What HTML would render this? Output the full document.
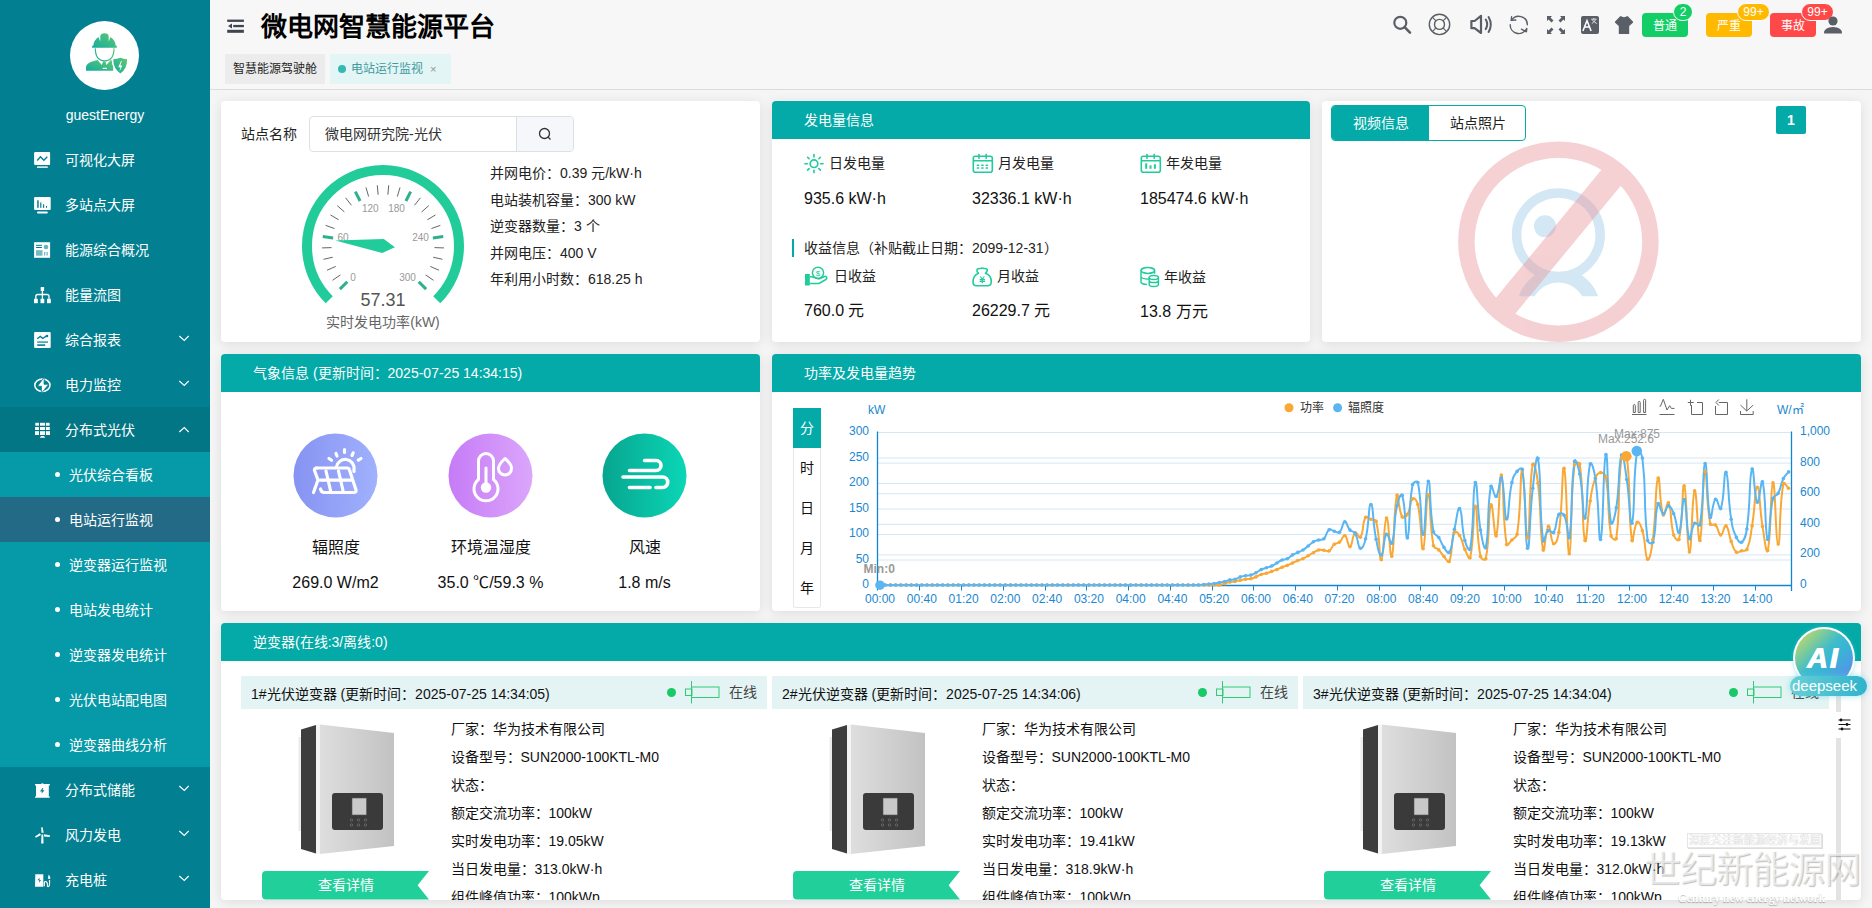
<!DOCTYPE html>
<html lang="zh-CN"><head><meta charset="utf-8">
<style>
*{box-sizing:border-box;margin:0;padding:0}
html,body{width:1872px;height:908px;overflow:hidden;background:#f5f5f5;font-family:"Liberation Sans",sans-serif;color:#000}
.abs{position:absolute}
#side{position:absolute;left:0;top:0;width:210px;height:908px;background:#028091;color:#fff;overflow:hidden}
.mi{position:absolute;left:0;width:210px;height:45px;font-size:14px;line-height:45px}
.mi .t{position:absolute;left:65px;top:1px}
.mi svg.ic{position:absolute;left:33px;top:14px;width:18px;height:18px}
.mi .ch{position:absolute;left:178px;top:19px;width:10px;height:6px}
.sub .t{left:69px}
.sub .b{position:absolute;left:55px;top:20px;width:5px;height:5px;border-radius:50%;background:#fff}
#hdr{position:absolute;left:210px;top:0;width:1662px;height:90px;background:#f7f7f7;border-bottom:1px solid #dcdcdc}
.panel{position:absolute;background:#fff;border-radius:4px;box-shadow:0 2px 12px 0 rgba(0,0,0,.1);overflow:hidden}
.ph{position:absolute;left:0;top:0;right:0;height:38px;background:#03aaa8;color:#fff;font-size:14px;line-height:38px;padding-left:32px}
</style></head><body>
<div id="side">
<div class="abs" style="left:70px;top:21px;width:69px;height:69px;border-radius:50%;background:#fff"></div>
<svg class="abs" style="left:80px;top:28px" width="50" height="50" viewBox="0 0 50 50">
<defs><linearGradient id="ga" x1="0" y1="1" x2="1" y2="0"><stop offset="0" stop-color="#13ad9e"/><stop offset="1" stop-color="#62c870"/></linearGradient></defs>
<g fill="url(#ga)">
<path d="M13.3 17.7 Q13.8 12 18.5 9 L20.3 13.6 L20.3 8.3 Q20.5 5.2 24.5 5.2 Q28.5 5.2 28.7 8.3 L28.7 13.6 L30.5 9 Q35.2 12 35.7 17.7 L36.8 17.7 L36.8 19.8 L12.1 19.8 L12.1 17.7 Z"/>
<path d="M6 42.7 L6 38.5 Q7 34.5 14 33 L17.5 32 L21.8 36.9 L23.1 33.6 L25.5 33.6 L26.4 36.9 L30.8 32 L33.2 32.6 L33.2 42.7 Z"/>
<path d="M33.3 31.3 Q37 31 40.3 29.7 Q43.6 31 47.1 31.3 Q47.2 41 40.3 45.4 Q33.4 41 33.3 31.3 Z"/>
</g>
<path d="M15.3 20.3 Q15.3 32.8 24.7 32.9 Q34 32.8 34 20.3" fill="none" stroke="url(#ga)" stroke-width="1.2"/>
<rect x="22.6" y="39.8" width="4.4" height="1.2" rx=".6" fill="#fff"/>
<path d="M32.2 31.5 Q32.2 41.5 40.3 46.5" fill="none" stroke="#fff" stroke-width="1.1"/>
<path d="M41 33 L38.3 39.2 L40.4 39.2 L39.5 43.5 L42.3 37.4 L40.3 37.4 L41.8 33 Z" fill="#fff"/>
</svg>
<div class="abs" style="left:0;top:105px;width:210px;text-align:center;font-size:14px;line-height:20px">guestEnergy</div>
<div class="mi" style="top:137px;"><svg class="abs" style="left:28px;top:8px" width="30" height="30" viewBox="0 0 30 30"><rect x="6.1" y="7.1" width="16" height="12.9" rx="1" fill="#fff"/><polyline points="9.2,15.5 12.5,11.8 15.8,15.2 19.3,11.8" fill="none" stroke="#028091" stroke-width="1.4"/><rect x="9" y="21.4" width="10.8" height="1.4" fill="#fff"/></svg><span class="t">可视化大屏</span></div>
<div class="mi" style="top:182px;"><svg class="abs" style="left:28px;top:8px" width="30" height="30" viewBox="0 0 30 30"><rect x="6.1" y="7.1" width="16.6" height="12.8" rx="1" fill="#fff"/><g fill="#028091"><rect x="9.2" y="10.3" width="1.5" height="7.5"/><rect x="12.2" y="12.5" width="1.2" height="5.3"/><rect x="15" y="14.4" width="1.2" height="3.4"/><rect x="18" y="16" width="1" height="1.8"/></g><rect x="9" y="21.5" width="10.8" height="2" rx="1" fill="#fff"/></svg><span class="t">多站点大屏</span></div>
<div class="mi" style="top:227px;"><svg class="abs" style="left:28px;top:8px" width="30" height="30" viewBox="0 0 30 30"><rect x="6.1" y="7.2" width="16" height="15.6" fill="#fff"/><g fill="#028091"><rect x="8" y="9.8" width="6" height="1"/><rect x="8" y="12" width="6" height="1"/><rect x="8" y="15.2" width="6.5" height="5.5" opacity=".55"/><circle cx="18" cy="12" r="2.3" opacity=".6"/><rect x="16" y="17" width="1.3" height="3.5" opacity=".55"/><rect x="18.5" y="17" width="1.3" height="3.5" opacity=".55"/></g></svg><span class="t">能源综合概况</span></div>
<div class="mi" style="top:272px;"><svg class="abs" style="left:28px;top:8px" width="30" height="30" viewBox="0 0 30 30"><rect x="12.7" y="7" width="3.4" height="4" fill="#fff"/><path d="M14.4 11 V19 M7.8 19 V16.5 Q7.8 14.5 9.8 14.5 H19 Q21 14.5 21 16.5 V19" fill="none" stroke="#fff" stroke-width="1.3"/><rect x="6" y="18.8" width="3.8" height="4.4" fill="#fff"/><rect x="12.5" y="18.8" width="3.8" height="4.4" fill="#fff"/><rect x="19" y="18.8" width="3.8" height="4.4" fill="#fff"/></svg><span class="t">能量流图</span></div>
<div class="mi" style="top:317px;"><svg class="abs" style="left:28px;top:8px" width="30" height="30" viewBox="0 0 30 30"><rect x="6.1" y="7.1" width="16.6" height="16" rx="1" fill="#fff"/><polyline points="9.2,13.8 12.3,11.5 14.8,13.5 19,10.7" fill="none" stroke="#028091" stroke-width="1.4"/><circle cx="19" cy="11" r="1.3" fill="#028091"/><rect x="9.2" y="16.3" width="10.8" height="1.6" fill="#028091" opacity=".75"/><rect x="9.2" y="19.3" width="8" height="1.6" fill="#028091"/></svg><span class="t">综合报表</span><svg class="abs" style="left:170px;top:16px" width="30" height="18" viewBox="0 0 30 18"><polyline points="9.3,3 14.3,7.4 18.7,3" fill="none" stroke="#fff" stroke-width="1.1"/></svg></div>
<div class="mi" style="top:362px;"><svg class="abs" style="left:28px;top:8px" width="30" height="30" viewBox="0 0 30 30"><ellipse cx="14.4" cy="15.3" rx="7.6" ry="6.2" fill="none" stroke="#fff" stroke-width="1.5"/><path d="M16.3 7 L9.5 16.3 L13.5 16.3 L13.3 23.3 L20.8 14.3 L16 14.3 Z" fill="#fff" stroke="#028091" stroke-width=".8"/></svg><span class="t">电力监控</span><svg class="abs" style="left:170px;top:16px" width="30" height="18" viewBox="0 0 30 18"><polyline points="9.3,3 14.3,7.4 18.7,3" fill="none" stroke="#fff" stroke-width="1.1"/></svg></div>
<div class="mi" style="top:407px;background:#037686;"><svg class="abs" style="left:28px;top:8px" width="30" height="30" viewBox="0 0 30 30"><g fill="#fff"><rect x="7.3" y="7.8" width="3.6" height="2.9"/><rect x="12" y="7.8" width="5.1" height="2.9"/><rect x="18" y="7.8" width="3.6" height="2.9"/><rect x="7.1" y="12" width="3.8" height="3"/><rect x="12" y="12" width="5.1" height="3"/><rect x="18" y="12" width="3.8" height="3"/><rect x="7" y="16.2" width="4" height="3.8"/><rect x="12" y="16.2" width="5.1" height="3.8"/><rect x="18" y="16.2" width="4" height="3.8"/><path d="M13 21 H16 L17.2 22.8 H11.8 Z"/></g></svg><span class="t">分布式光伏</span><svg class="abs" style="left:170px;top:16px" width="30" height="18" viewBox="0 0 30 18"><polyline points="9.3,9 14.3,4.6 18.7,9" fill="none" stroke="#fff" stroke-width="1.1"/></svg></div>
<div class="abs" style="left:0;top:452px;width:210px;height:315px;background:#0699a7"></div>
<div class="mi sub" style="top:452px;"><span class="b"></span><span class="t">光伏综合看板</span></div>
<div class="mi sub" style="top:497px;background:#236a86;"><span class="b"></span><span class="t">电站运行监视</span></div>
<div class="mi sub" style="top:542px;"><span class="b"></span><span class="t">逆变器运行监视</span></div>
<div class="mi sub" style="top:587px;"><span class="b"></span><span class="t">电站发电统计</span></div>
<div class="mi sub" style="top:632px;"><span class="b"></span><span class="t">逆变器发电统计</span></div>
<div class="mi sub" style="top:677px;"><span class="b"></span><span class="t">光伏电站配电图</span></div>
<div class="mi sub" style="top:722px;"><span class="b"></span><span class="t">逆变器曲线分析</span></div>
<div class="mi" style="top:767px"><svg class="abs" style="left:28px;top:8px" width="30" height="30" viewBox="0 0 30 30"><path d="M7 9 H13 Q14.4 7.6 15.8 9 H21.8 V10.5 H20.8 V21.5 H21.8 V22.8 H7 V21.5 H8 V10.5 H7 Z" fill="#fff"/><path d="M14.5 13 L12 16.5 L14 16.5 L13.5 18.8 L16.5 15.3 L14.5 15.3 L15.3 13 Z" fill="#028091"/></svg><span class="t">分布式储能</span><svg class="abs" style="left:170px;top:16px" width="30" height="18" viewBox="0 0 30 18"><polyline points="9.3,3 14.3,7.4 18.7,3" fill="none" stroke="#fff" stroke-width="1.1"/></svg></div>
<div class="mi" style="top:812px"><svg class="abs" style="left:28px;top:8px" width="30" height="30" viewBox="0 0 30 30"><g fill="#fff"><path d="M13.2 7.2 H14.6 L15.7 12.8 L13.5 12.8 Z"/><path d="M13.5 14.5 H15.2 L15.5 23.5 H13.2 Z"/><path d="M7 16.5 L11.8 13.3 L13 15 L7.8 17.8 Z"/><path d="M16 14.2 L21.8 15.3 L21.8 17 L16 16.5 Z"/></g></svg><span class="t">风力发电</span><svg class="abs" style="left:170px;top:16px" width="30" height="18" viewBox="0 0 30 18"><polyline points="9.3,3 14.3,7.4 18.7,3" fill="none" stroke="#fff" stroke-width="1.1"/></svg></div>
<div class="mi" style="top:857px"><svg class="abs" style="left:28px;top:8px" width="30" height="30" viewBox="0 0 30 30"><path d="M7.3 9.2 H15.3 V21.8 H7 Z" fill="#fff"/><path d="M11.5 12.8 L9.5 15.2 L11.3 15.2 L11 17.8 L13 15 L11.5 15 Z" fill="#028091"/><path d="M16.3 21.3 V18.5 Q16.3 16.3 17.6 16.5 Q19.3 16.8 19.5 19.5 V21.2 Q19.8 21.8 20.8 21.3 Q21.8 21 21.5 15" fill="none" stroke="#fff" stroke-width="1.2"/><path d="M20.8 9.5 Q22.5 11.5 22.2 14 H20.3 Q19.8 11.5 20.8 9.5 Z" fill="#fff"/></svg><span class="t">充电桩</span><svg class="abs" style="left:170px;top:16px" width="30" height="18" viewBox="0 0 30 18"><polyline points="9.3,3 14.3,7.4 18.7,3" fill="none" stroke="#fff" stroke-width="1.1"/></svg></div>
</div>
<div id="hdr">
<svg class="abs" style="left:17px;top:19px" width="18" height="15" viewBox="0 0 18 15"><g fill="#3f4450"><rect x="0.2" y="0.6" width="16.7" height="2.3"/><rect x="6.2" y="5.9" width="10.7" height="2.3"/><path d="M1 7 L5 4.5 L5 9.5 Z"/><rect x="0.2" y="10.8" width="16.7" height="3"/></g></svg>
<div class="abs" style="left:51px;top:9px;font-size:26px;line-height:36px;font-weight:bold;color:#000">微电网智慧能源平台</div>
<div class="abs" style="left:15px;top:54px;width:100px;height:30px;background:#ececec;font-size:12px;line-height:30px;text-align:center;color:#1f1f1f">智慧能源驾驶舱</div>
<div class="abs" style="left:120px;top:54px;width:121px;height:30px;background:#e3f5f5;font-size:12px;line-height:30px;color:#3e9aa0"><span class="abs" style="left:8px;top:11px;width:8px;height:8px;border-radius:50%;background:#33b9b3"></span><span class="abs" style="left:21px;top:0">电站运行监视</span><span class="abs" style="left:100px;top:0;font-size:11px;color:#8a9a9c">×</span></div>
<svg class="abs" style="left:1181px;top:14px" width="24" height="22" viewBox="0 0 24 22"><circle cx="9.3" cy="8.8" r="6" fill="none" stroke="#5a5e66" stroke-width="2.2"/><path d="M13.6 13.2 L19 18.6" stroke="#5a5e66" stroke-width="2.6" stroke-linecap="round"/></svg>
<svg class="abs" style="left:1217px;top:12px" width="26" height="26" viewBox="0 0 26 26"><circle cx="12.5" cy="12.4" r="10.2" fill="none" stroke="#5a5e66" stroke-width="1.4"/><circle cx="12.5" cy="12.4" r="5" fill="none" stroke="#5a5e66" stroke-width="1.4"/><path d="M5.3 5.2 L9 8.9 M19.7 5.2 L16 8.9 M5.3 19.6 L9 15.9 M19.7 19.6 L16 15.9" stroke="#5a5e66" stroke-width="1.2"/></svg>
<svg class="abs" style="left:1258px;top:13px" width="26" height="24" viewBox="0 0 26 24"><path d="M3.4 8 H6.6 L13 2.8 V20 L6.6 15.2 H3.4 Z" fill="none" stroke="#5a5e66" stroke-width="2.2" stroke-linejoin="round"/><path d="M17.8 6.5 Q20.6 11.3 17.8 16.1 M20.6 4 Q25 11.5 20.6 19" fill="none" stroke="#5a5e66" stroke-width="2" stroke-linecap="round"/></svg>
<svg class="abs" style="left:1297px;top:13px" width="24" height="24" viewBox="0 0 24 24"><g fill="none" stroke="#5a5e66" stroke-width="1.4" stroke-linecap="round" stroke-linejoin="round"><path d="M4.4 7.5 A8.6 8.6 0 0 1 20.4 11.8"/><path d="M4.6 3.8 L4.2 7.4 L8.8 7"/><path d="M3.2 11.8 A8.6 8.6 0 0 0 19.3 16.1"/><path d="M14.4 16.2 L19.4 18.8 L19.8 15.4"/></g></svg>
<svg class="abs" style="left:1335px;top:14px" width="22" height="22" viewBox="0 0 22 22"><g fill="#5a5e66"><path d="M2 2 H7 L5.5 3.5 L8.5 6.5 L6.5 8.5 L3.5 5.5 L2 7 Z"/><path d="M20 2 V7 L18.5 5.5 L15.5 8.5 L13.5 6.5 L16.5 3.5 L15 2 Z"/><path d="M2 20 V15 L3.5 16.5 L6.5 13.5 L8.5 15.5 L5.5 18.5 L7 20 Z"/><path d="M20 20 H15 L16.5 18.5 L13.5 15.5 L15.5 13.5 L18.5 16.5 L20 15 Z"/></g></svg>
<svg class="abs" style="left:1369px;top:14px" width="22" height="22" viewBox="0 0 22 22"><rect x="2" y="2" width="18" height="18" rx="2" fill="#5a5e66"/><path d="M3.9 17 L8 6.6 L12.1 17 M5.5 13 H10.5" fill="none" stroke="#fff" stroke-width="1.5"/><path d="M12.3 5.2 H17.5 M14.9 4 V5.2 M12.8 9.6 Q15 8 16.8 5.6 M13 5.6 Q15 8 17.8 9.6" fill="none" stroke="#fff" stroke-width=".8"/></svg>
<svg class="abs" style="left:1403px;top:14px" width="22" height="22" viewBox="0 0 22 22"><path d="M7.4 2 Q11 4.3 14.6 2 L19.9 7.6 Q20.3 8.2 19.9 8.8 L16.2 12 V19.9 H5.8 V12 L2.1 8.8 Q1.7 8.2 2.1 7.6 Z" fill="#5a5e66"/></svg>
<div class="abs" style="left:1432px;top:13px;width:46px;height:24px;padding-top:1px;border-radius:4px;background:#13ce66;color:#fff;font-size:12px;line-height:24px;text-align:center">普通</div>
<div class="abs" style="left:1463px;top:3px;width:20px;height:18px;border-radius:9px;background:#13ce66;border:1px solid #fff;color:#fff;font-size:12px;line-height:16px;text-align:center">2</div>
<div class="abs" style="left:1496px;top:13px;width:46px;height:24px;padding-top:1px;border-radius:4px;background:#ffba00;color:#fff;font-size:12px;line-height:24px;text-align:center">严重</div>
<div class="abs" style="left:1527px;top:3px;width:33px;height:18px;border-radius:9px;background:#ffba00;border:1px solid #fff;color:#fff;font-size:12px;line-height:16px;text-align:center">99+</div>
<div class="abs" style="left:1560px;top:13px;width:46px;height:24px;padding-top:1px;border-radius:4px;background:#ff4949;color:#fff;font-size:12px;line-height:24px;text-align:center">事故</div>
<div class="abs" style="left:1591px;top:3px;width:33px;height:18px;border-radius:9px;background:#ff4949;border:1px solid #fff;color:#fff;font-size:12px;line-height:16px;text-align:center">99+</div>
<svg class="abs" style="left:1612px;top:14px" width="22" height="22" viewBox="0 0 22 22"><circle cx="11" cy="7" r="4.6" fill="#5a5e66"/><path d="M2 19.5 Q2 13 11 13 Q20 13 20 19.5 Z" fill="#5a5e66"/></svg>
</div>
<div class="panel" style="left:221px;top:101px;width:539px;height:241px">
<div class="abs" style="left:20px;top:23px;font-size:14px;line-height:20px;color:#222">站点名称</div>
<div class="abs" style="left:88px;top:15px;width:265px;height:36px;border:1px solid #dcdfe6;border-radius:4px;background:#fff"></div>
<div class="abs" style="left:295px;top:16px;width:57px;height:34px;background:#f5f7fa;border-left:1px solid #dcdfe6;border-radius:0 4px 4px 0"></div>
<svg class="abs" style="left:316px;top:25px" width="16" height="16" viewBox="0 0 16 16"><circle cx="7.5" cy="7.5" r="5" fill="none" stroke="#333" stroke-width="1.3"/><path d="M11 11 L13.5 13.5" stroke="#333" stroke-width="1.3"/></svg>
<div class="abs" style="left:104px;top:23px;font-size:14px;line-height:20px;color:#333">微电网研究院-光伏</div>
<svg class="abs" style="left:0;top:0" width="539" height="241"><path d="M108.26 198.74 A76 76 0 1 1 215.74 198.74" fill="none" stroke="#22cc9a" stroke-width="10"/><line x1="126.29" y1="180.71" x2="118.87" y2="188.13" stroke="#2db18c" stroke-width="3"/><line x1="119.41" y1="173.95" x2="111.55" y2="179.29" stroke="#666" stroke-width="1"/><line x1="114.74" y1="165.45" x2="106.02" y2="169.23" stroke="#666" stroke-width="1"/><line x1="111.74" y1="156.23" x2="102.47" y2="158.31" stroke="#666" stroke-width="1"/><line x1="110.53" y1="146.62" x2="101.03" y2="146.92" stroke="#666" stroke-width="1"/><line x1="112.12" y1="137.10" x2="101.75" y2="135.46" stroke="#2db18c" stroke-width="3"/><line x1="113.54" y1="127.55" x2="104.61" y2="124.34" stroke="#666" stroke-width="1"/><line x1="117.67" y1="118.78" x2="109.49" y2="113.95" stroke="#666" stroke-width="1"/><line x1="123.37" y1="110.94" x2="116.24" y2="104.66" stroke="#666" stroke-width="1"/><line x1="130.44" y1="104.31" x2="124.61" y2="96.80" stroke="#666" stroke-width="1"/><line x1="139.07" y1="100.00" x2="134.31" y2="90.65" stroke="#2db18c" stroke-width="3"/><line x1="147.63" y1="95.54" x2="144.98" y2="86.42" stroke="#666" stroke-width="1"/><line x1="157.15" y1="93.73" x2="156.26" y2="84.27" stroke="#666" stroke-width="1"/><line x1="166.85" y1="93.73" x2="167.74" y2="84.27" stroke="#666" stroke-width="1"/><line x1="176.37" y1="95.54" x2="179.02" y2="86.42" stroke="#666" stroke-width="1"/><line x1="184.93" y1="100.00" x2="189.69" y2="90.65" stroke="#2db18c" stroke-width="3"/><line x1="193.56" y1="104.31" x2="199.39" y2="96.80" stroke="#666" stroke-width="1"/><line x1="200.63" y1="110.94" x2="207.76" y2="104.66" stroke="#666" stroke-width="1"/><line x1="206.33" y1="118.78" x2="214.51" y2="113.95" stroke="#666" stroke-width="1"/><line x1="210.46" y1="127.55" x2="219.39" y2="124.34" stroke="#666" stroke-width="1"/><line x1="211.88" y1="137.10" x2="222.25" y2="135.46" stroke="#2db18c" stroke-width="3"/><line x1="213.47" y1="146.62" x2="222.97" y2="146.92" stroke="#666" stroke-width="1"/><line x1="212.26" y1="156.23" x2="221.53" y2="158.31" stroke="#666" stroke-width="1"/><line x1="209.26" y1="165.45" x2="217.98" y2="169.23" stroke="#666" stroke-width="1"/><line x1="204.59" y1="173.95" x2="212.45" y2="179.29" stroke="#666" stroke-width="1"/><line x1="197.71" y1="180.71" x2="205.13" y2="188.13" stroke="#2db18c" stroke-width="3"/><text x="132.0" y="180.2" text-anchor="middle" font-size="10" fill="#999" font-family="Liberation Sans">0</text><text x="122.0" y="139.9" text-anchor="middle" font-size="10" fill="#999" font-family="Liberation Sans">60</text><text x="149.3" y="111.2" text-anchor="middle" font-size="10" fill="#999" font-family="Liberation Sans">120</text><text x="175.5" y="111.2" text-anchor="middle" font-size="10" fill="#999" font-family="Liberation Sans">180</text><text x="199.5" y="139.9" text-anchor="middle" font-size="10" fill="#999" font-family="Liberation Sans">240</text><text x="186.6" y="180.2" text-anchor="middle" font-size="10" fill="#999" font-family="Liberation Sans">300</text><path d="M114.32 139.50 L161.20 151.95 L173.92 146.37 L162.80 138.05 Z" fill="#22cc9a"/></svg>
<div class="abs" style="left:100px;top:187px;width:124px;text-align:center;font-size:18px;line-height:24px;color:#555">57.31</div>
<div class="abs" style="left:100px;top:211px;width:124px;text-align:center;font-size:14px;line-height:20px;color:#666">实时发电功率(kW)</div>
<div class="abs" style="left:269px;top:59px;font-size:14px;line-height:26.5px;color:#222">并网电价：0.39 元/kW·h<br>电站装机容量：300 kW<br>逆变器数量：3 个<br>并网电压：400 V<br>年利用小时数：618.25 h</div>
</div>
<div class="panel" style="left:772px;top:101px;width:538px;height:241px"><div class="ph">发电量信息</div>
<svg class="abs" style="left:28px;top:49px" width="30" height="30" viewBox="0 0 30 30"><circle cx="14" cy="13.7" r="3.8" fill="none" stroke="#22cc9a" stroke-width="1.7"/><g stroke="#22cc9a" stroke-width="1.6" stroke-linecap="round"><line x1="14" y1="4.6" x2="14" y2="7"/><line x1="14" y1="20.4" x2="14" y2="22.8"/><line x1="4.9" y1="13.7" x2="7.3" y2="13.7"/><line x1="20.7" y1="13.7" x2="23.1" y2="13.7"/><line x1="7.6" y1="7.3" x2="9.1" y2="8.8"/><line x1="18.9" y1="18.6" x2="20.4" y2="20.1"/><line x1="20.4" y1="7.3" x2="18.9" y2="8.8"/><line x1="9.1" y1="18.6" x2="7.6" y2="20.1"/></g></svg><div class="abs" style="left:57px;top:52px;font-size:14px;line-height:20px;color:#222">日发电量</div>
<svg class="abs" style="left:196px;top:49px" width="30" height="30" viewBox="0 0 30 30"><rect x="5.3" y="6.3" width="19" height="16" rx="2" fill="none" stroke="#22cc9a" stroke-width="1.6"/><line x1="5.3" y1="10.8" x2="24.3" y2="10.8" stroke="#22cc9a" stroke-width="1.6"/><line x1="11" y1="4.5" x2="11" y2="8.3" stroke="#22cc9a" stroke-width="1.6" stroke-linecap="round"/><line x1="18.2" y1="4.5" x2="18.2" y2="8.3" stroke="#22cc9a" stroke-width="1.6" stroke-linecap="round"/><rect x="8.7" y="14.600000000000001" width="2.6" height="1.4" rx=".5" fill="#22cc9a"/><rect x="8.7" y="17.3" width="2.6" height="1.4" rx=".5" fill="#22cc9a"/><rect x="13.1" y="14.600000000000001" width="2.6" height="1.4" rx=".5" fill="#22cc9a"/><rect x="13.1" y="17.3" width="2.6" height="1.4" rx=".5" fill="#22cc9a"/><rect x="17.5" y="14.600000000000001" width="2.6" height="1.4" rx=".5" fill="#22cc9a"/><rect x="17.5" y="17.3" width="2.6" height="1.4" rx=".5" fill="#22cc9a"/></svg><div class="abs" style="left:226px;top:52px;font-size:14px;line-height:20px;color:#222">月发电量</div>
<svg class="abs" style="left:364px;top:49px" width="30" height="30" viewBox="0 0 30 30"><rect x="5.3" y="6.3" width="19" height="16" rx="2" fill="none" stroke="#22cc9a" stroke-width="1.6"/><line x1="5.3" y1="10.8" x2="24.3" y2="10.8" stroke="#22cc9a" stroke-width="1.6"/><line x1="11" y1="4.5" x2="11" y2="8.3" stroke="#22cc9a" stroke-width="1.6" stroke-linecap="round"/><line x1="18.2" y1="4.5" x2="18.2" y2="8.3" stroke="#22cc9a" stroke-width="1.6" stroke-linecap="round"/><rect x="9.2" y="13.3" width="2" height="5.5" fill="#22cc9a"/><rect x="13.5" y="15.3" width="2" height="3.5" fill="#22cc9a"/><rect x="17.9" y="14.3" width="2" height="4.5" fill="#22cc9a"/></svg><div class="abs" style="left:394px;top:52px;font-size:14px;line-height:20px;color:#222">年发电量</div>
<div class="abs" style="left:32px;top:87px;font-size:16px;line-height:22px;color:#111">935.6 kW·h</div>
<div class="abs" style="left:200px;top:87px;font-size:16px;line-height:22px;color:#111">32336.1 kW·h</div>
<div class="abs" style="left:368px;top:87px;font-size:16px;line-height:22px;color:#111">185474.6 kW·h</div>
<div class="abs" style="left:20px;top:138px;width:2px;height:18px;background:#03aaa8"></div>
<div class="abs" style="left:32px;top:137px;font-size:14px;line-height:20px;color:#222">收益信息（补贴截止日期：2099-12-31）</div>
<svg class="abs" style="left:28px;top:161px" width="30" height="30" viewBox="0 0 30 30"><rect x="5" y="12" width="4.8" height="11.5" fill="#22cc9a"/><circle cx="18" cy="10.8" r="5.6" fill="none" stroke="#22cc9a" stroke-width="1.5"/><text x="18" y="14" text-anchor="middle" font-size="8" fill="#22cc9a" font-family="Liberation Sans">$</text><path d="M9.8 14.8 Q12 14.3 15 15.8 L18.3 16.7 Q19.5 16.7 20.5 16.2 L24.5 14.5 Q26.5 14 26.8 16 Q26.8 17 25.5 17.8 L19 21.5 H9.8" fill="none" stroke="#22cc9a" stroke-width="1.6"/></svg><div class="abs" style="left:62px;top:165px;font-size:14px;line-height:20px;color:#222">日收益</div>
<svg class="abs" style="left:196px;top:161px" width="30" height="30" viewBox="0 0 30 30"><path d="M10.5 11.3 Q8.5 9.5 9 7.5 Q10 6.3 12.5 6.5 Q14.2 5.6 15.8 6.5 Q18.3 6.3 19.3 7.5 Q19.5 9.5 17.5 11.3 Q23.5 13.5 23.3 20 Q23 23.8 19.5 23.8 H8.5 Q5 23.8 5 20 Q5 13.5 10.5 11.3 Z" fill="none" stroke="#22cc9a" stroke-width="1.6" stroke-linejoin="round"/><path d="M12.3 14.5 L14.3 17.3 L16.3 14.5 M14.3 17.3 V21.3 M11.6 17.6 H17 M11.6 19.4 H17" fill="none" stroke="#22cc9a" stroke-width="1.2"/></svg><div class="abs" style="left:225px;top:165px;font-size:14px;line-height:20px;color:#222">月收益</div>
<svg class="abs" style="left:364px;top:161px" width="30" height="30" viewBox="0 0 30 30"><g fill="none" stroke="#22cc9a" stroke-width="1.5"><ellipse cx="11.8" cy="8.5" rx="6.8" ry="2.9"/><path d="M5 8.5 V20 Q5 22 11 22.6 M18.6 8.5 V11.8 M5 15 Q6 16.8 12.8 17.3"/><ellipse cx="17.8" cy="15.5" rx="4.6" ry="2"/><path d="M13.2 15.5 V22.5 Q13.2 24.5 17.8 24.5 Q22.4 24.5 22.4 22.5 V15.5 M13.2 19 Q13.5 20.6 17.8 20.6 Q22 20.6 22.4 19"/></g></svg><div class="abs" style="left:392px;top:166px;font-size:14px;line-height:20px;color:#222">年收益</div>
<div class="abs" style="left:32px;top:199px;font-size:16px;line-height:22px;color:#111">760.0 元</div>
<div class="abs" style="left:200px;top:199px;font-size:16px;line-height:22px;color:#111">26229.7 元</div>
<div class="abs" style="left:368px;top:200px;font-size:16px;line-height:22px;color:#111">13.8 万元</div>
</div>
<div class="panel" style="left:1322px;top:101px;width:539px;height:241px">
<svg class="abs" style="left:0;top:0" width="539" height="241">
<clipPath id="cb"><rect x="0" y="0" width="539" height="195.3"/></clipPath>
<circle cx="236.4" cy="208.7" r="34.5" fill="none" stroke="#d3e7f4" stroke-width="14.5" clip-path="url(#cb)"/>
<circle cx="236.4" cy="133.8" r="41.8" fill="#fff" stroke="#d3e7f4" stroke-width="9.5"/>
<circle cx="223" cy="125.30000000000001" r="11" fill="#d3e7f4"/>
<g opacity="0.43">
<circle cx="236.4" cy="140.7" r="92" fill="none" stroke="#e89499" stroke-width="16.5"/>
<rect x="223.9" y="48.7" width="25" height="184" fill="#e89499" transform="rotate(39.5 236.4 140.7)"/>
</g>
</svg>
<div class="abs" style="left:9px;top:4px;width:195px;height:36px;border:1px solid #03aaa8;border-radius:4px;overflow:hidden;background:#fff">
<div class="abs" style="left:0;top:0;width:97px;height:34px;background:#03aaa8;color:#fff;font-size:14px;line-height:34px;text-align:center">视频信息</div>
<div class="abs" style="left:97px;top:0;width:97px;height:34px;color:#222;font-size:14px;line-height:34px;text-align:center">站点照片</div>
</div>
<div class="abs" style="left:454px;top:5px;width:30px;height:28px;background:#03aaa8;border-radius:2px;color:#fff;font-size:14px;font-weight:bold;line-height:28px;text-align:center">1</div>
</div>
<div class="panel" style="left:221px;top:354px;width:539px;height:257px"><div class="ph">气象信息 (更新时间：2025-07-25 14:34:15)</div>
<svg class="abs" style="left:72.0px;top:79.0px" width="85" height="85" viewBox="0 0 85 85"><defs><linearGradient id="g1" x1="0" y1="0" x2="1" y2="0"><stop offset="0" stop-color="#8793f2"/><stop offset="1" stop-color="#a0b1fd"/></linearGradient></defs><circle cx="42.5" cy="42.5" r="42" fill="url(#g1)"/><g fill="none" stroke="#fff" stroke-width="3.2" stroke-linecap="round" stroke-linejoin="round"><path d="M24 35 Q21 35 21.5 37.5 L25 47 L20.5 59.5"/><path d="M23 35 H54 Q56 35 56.5 37 L63 57 Q63.5 59.5 61 59.5 H31 Q28.5 59.5 27.5 56"/><path d="M27 47.2 H58.5"/><path d="M33 38 L37.5 57.5 M45.5 38 L50 57.5"/><path d="M43.5 34 A8.8 8.8 0 0 1 61 36.5 L61 38.5"/><path d="M43 20.5 L44 23 M51.5 16.5 L51.5 19.5 M60.2 19.8 L59 22.5 M36 25.5 L38.5 27.3 M68 25.5 L65.3 27.2"/></g></svg>
<svg class="abs" style="left:227.0px;top:79.0px" width="85" height="85" viewBox="0 0 85 85"><defs><linearGradient id="g2" x1="0" y1="0" x2="1" y2="0"><stop offset="0" stop-color="#c67bf6"/><stop offset="1" stop-color="#dba6fb"/></linearGradient></defs><circle cx="42.5" cy="42.5" r="42" fill="url(#g2)"/><g fill="none" stroke="#fff" stroke-width="3.2" stroke-linecap="round" stroke-linejoin="round"><path d="M30.5 46.5 V28 A7.5 7.5 0 0 1 45.5 28 V46.5 A12 12 0 1 1 30.5 46.5 Z" stroke-width="3"/><path d="M38 35 V50" stroke-width="3"/><circle cx="38" cy="54.5" r="5.2" fill="#fff" stroke="none"/><path d="M57 25.5 Q64 31.5 63.5 35.5 A6.5 6.5 0 0 1 50.5 35.5 Q50.5 31.5 57 25.5 Z" stroke-width="3"/></g></svg>
<svg class="abs" style="left:381.0px;top:79.0px" width="85" height="85" viewBox="0 0 85 85"><defs><linearGradient id="g3" x1="0" y1="0" x2="1" y2="0"><stop offset="0" stop-color="#07a58f"/><stop offset="1" stop-color="#0bd6b6"/></linearGradient></defs><circle cx="42.5" cy="42.5" r="42" fill="url(#g3)"/><g fill="none" stroke="#fff" stroke-width="3.2" stroke-linecap="round" stroke-linejoin="round"><path d="M27.5 37.5 H54 A5 5 0 0 0 54 27.5 H42.5" stroke-width="3.6"/><path d="M21 44 H60.5 A5.2 5.2 0 0 1 60.5 54.5 H54" stroke-width="3.6"/><path d="M27.5 54.5 H48" stroke-width="3.6"/></g></svg>
<div class="abs" style="left:54.5px;top:183px;width:120px;text-align:center;font-size:16px;line-height:22px;color:#111">辐照度</div>
<div class="abs" style="left:209.5px;top:183px;width:120px;text-align:center;font-size:16px;line-height:22px;color:#111">环境温湿度</div>
<div class="abs" style="left:363.5px;top:183px;width:120px;text-align:center;font-size:16px;line-height:22px;color:#111">风速</div>
<div class="abs" style="left:44.5px;top:218px;width:140px;text-align:center;font-size:16px;line-height:22px;color:#111">269.0 W/m2</div>
<div class="abs" style="left:199.5px;top:218px;width:140px;text-align:center;font-size:16px;line-height:22px;color:#111">35.0 ℃/59.3 %</div>
<div class="abs" style="left:353.5px;top:218px;width:140px;text-align:center;font-size:16px;line-height:22px;color:#111">1.8 m/s</div>
</div>
<div class="panel" style="left:772px;top:354px;width:1089px;height:257px"><div class="ph">功率及发电量趋势</div>
<div id="chartsvg"><svg class="abs" style="left:0;top:0" width="1089" height="257" viewBox="772 354 1089 257" font-family="Liberation Sans"><line x1="877.5" y1="585.5" x2="1791.5" y2="585.5" stroke="#d5e6f6" stroke-width="1"/><line x1="877.5" y1="560.0" x2="1791.5" y2="560.0" stroke="#d5e6f6" stroke-width="1"/><line x1="877.5" y1="534.5" x2="1791.5" y2="534.5" stroke="#d5e6f6" stroke-width="1"/><line x1="877.5" y1="509.0" x2="1791.5" y2="509.0" stroke="#d5e6f6" stroke-width="1"/><line x1="877.5" y1="483.5" x2="1791.5" y2="483.5" stroke="#d5e6f6" stroke-width="1"/><line x1="877.5" y1="458.0" x2="1791.5" y2="458.0" stroke="#d5e6f6" stroke-width="1"/><line x1="877.5" y1="432.5" x2="1791.5" y2="432.5" stroke="#d5e6f6" stroke-width="1"/><line x1="877.5" y1="554.9" x2="1791.5" y2="554.9" stroke="#d5e6f6" stroke-width="1"/><line x1="877.5" y1="524.3" x2="1791.5" y2="524.3" stroke="#d5e6f6" stroke-width="1"/><line x1="877.5" y1="493.7" x2="1791.5" y2="493.7" stroke="#d5e6f6" stroke-width="1"/><line x1="877.5" y1="463.1" x2="1791.5" y2="463.1" stroke="#d5e6f6" stroke-width="1"/><line x1="877.5" y1="431.5" x2="877.5" y2="586" stroke="#1186d1" stroke-width="1.3"/><line x1="1791.5" y1="431.5" x2="1791.5" y2="591" stroke="#1186d1" stroke-width="1.3"/><line x1="877" y1="585.5" x2="1792" y2="585.5" stroke="#1186d1" stroke-width="1.3"/><line x1="877.5" y1="585.5" x2="877.5" y2="590.5" stroke="#1186d1" stroke-width="1"/><line x1="919.5" y1="585.5" x2="919.5" y2="590.5" stroke="#1186d1" stroke-width="1"/><line x1="961.5" y1="585.5" x2="961.5" y2="590.5" stroke="#1186d1" stroke-width="1"/><line x1="1003.5" y1="585.5" x2="1003.5" y2="590.5" stroke="#1186d1" stroke-width="1"/><line x1="1045.5" y1="585.5" x2="1045.5" y2="590.5" stroke="#1186d1" stroke-width="1"/><line x1="1086.5" y1="585.5" x2="1086.5" y2="590.5" stroke="#1186d1" stroke-width="1"/><line x1="1128.5" y1="585.5" x2="1128.5" y2="590.5" stroke="#1186d1" stroke-width="1"/><line x1="1170.5" y1="585.5" x2="1170.5" y2="590.5" stroke="#1186d1" stroke-width="1"/><line x1="1212.5" y1="585.5" x2="1212.5" y2="590.5" stroke="#1186d1" stroke-width="1"/><line x1="1253.5" y1="585.5" x2="1253.5" y2="590.5" stroke="#1186d1" stroke-width="1"/><line x1="1295.5" y1="585.5" x2="1295.5" y2="590.5" stroke="#1186d1" stroke-width="1"/><line x1="1337.5" y1="585.5" x2="1337.5" y2="590.5" stroke="#1186d1" stroke-width="1"/><line x1="1379.5" y1="585.5" x2="1379.5" y2="590.5" stroke="#1186d1" stroke-width="1"/><line x1="1420.5" y1="585.5" x2="1420.5" y2="590.5" stroke="#1186d1" stroke-width="1"/><line x1="1462.5" y1="585.5" x2="1462.5" y2="590.5" stroke="#1186d1" stroke-width="1"/><line x1="1504.5" y1="585.5" x2="1504.5" y2="590.5" stroke="#1186d1" stroke-width="1"/><line x1="1546.5" y1="585.5" x2="1546.5" y2="590.5" stroke="#1186d1" stroke-width="1"/><line x1="1588.5" y1="585.5" x2="1588.5" y2="590.5" stroke="#1186d1" stroke-width="1"/><line x1="1629.5" y1="585.5" x2="1629.5" y2="590.5" stroke="#1186d1" stroke-width="1"/><line x1="1671.5" y1="585.5" x2="1671.5" y2="590.5" stroke="#1186d1" stroke-width="1"/><line x1="1713.5" y1="585.5" x2="1713.5" y2="590.5" stroke="#1186d1" stroke-width="1"/><line x1="1755.5" y1="585.5" x2="1755.5" y2="590.5" stroke="#1186d1" stroke-width="1"/><text x="869" y="588.0" text-anchor="end" font-size="12" fill="#1a87d0">0</text><text x="869" y="562.5" text-anchor="end" font-size="12" fill="#1a87d0">50</text><text x="869" y="537.0" text-anchor="end" font-size="12" fill="#1a87d0">100</text><text x="869" y="511.5" text-anchor="end" font-size="12" fill="#1a87d0">150</text><text x="869" y="486.0" text-anchor="end" font-size="12" fill="#1a87d0">200</text><text x="869" y="460.5" text-anchor="end" font-size="12" fill="#1a87d0">250</text><text x="869" y="435.0" text-anchor="end" font-size="12" fill="#1a87d0">300</text><text x="1800" y="588.0" font-size="12" fill="#1a87d0">0</text><text x="1800" y="557.4" font-size="12" fill="#1a87d0">200</text><text x="1800" y="526.8" font-size="12" fill="#1a87d0">400</text><text x="1800" y="496.2" font-size="12" fill="#1a87d0">600</text><text x="1800" y="465.6" font-size="12" fill="#1a87d0">800</text><text x="1800" y="435.0" font-size="12" fill="#1a87d0">1,000</text><text x="880.0" y="603" text-anchor="middle" font-size="12" fill="#1a87d0">00:00</text><text x="921.8" y="603" text-anchor="middle" font-size="12" fill="#1a87d0">00:40</text><text x="963.6" y="603" text-anchor="middle" font-size="12" fill="#1a87d0">01:20</text><text x="1005.3" y="603" text-anchor="middle" font-size="12" fill="#1a87d0">02:00</text><text x="1047.1" y="603" text-anchor="middle" font-size="12" fill="#1a87d0">02:40</text><text x="1088.9" y="603" text-anchor="middle" font-size="12" fill="#1a87d0">03:20</text><text x="1130.7" y="603" text-anchor="middle" font-size="12" fill="#1a87d0">04:00</text><text x="1172.4" y="603" text-anchor="middle" font-size="12" fill="#1a87d0">04:40</text><text x="1214.2" y="603" text-anchor="middle" font-size="12" fill="#1a87d0">05:20</text><text x="1256.0" y="603" text-anchor="middle" font-size="12" fill="#1a87d0">06:00</text><text x="1297.8" y="603" text-anchor="middle" font-size="12" fill="#1a87d0">06:40</text><text x="1339.5" y="603" text-anchor="middle" font-size="12" fill="#1a87d0">07:20</text><text x="1381.3" y="603" text-anchor="middle" font-size="12" fill="#1a87d0">08:00</text><text x="1423.1" y="603" text-anchor="middle" font-size="12" fill="#1a87d0">08:40</text><text x="1464.9" y="603" text-anchor="middle" font-size="12" fill="#1a87d0">09:20</text><text x="1506.6" y="603" text-anchor="middle" font-size="12" fill="#1a87d0">10:00</text><text x="1548.4" y="603" text-anchor="middle" font-size="12" fill="#1a87d0">10:40</text><text x="1590.2" y="603" text-anchor="middle" font-size="12" fill="#1a87d0">11:20</text><text x="1632.0" y="603" text-anchor="middle" font-size="12" fill="#1a87d0">12:00</text><text x="1673.7" y="603" text-anchor="middle" font-size="12" fill="#1a87d0">12:40</text><text x="1715.5" y="603" text-anchor="middle" font-size="12" fill="#1a87d0">13:20</text><text x="1757.3" y="603" text-anchor="middle" font-size="12" fill="#1a87d0">14:00</text><text x="868" y="413.5" font-size="12" fill="#1a87d0">kW</text><text x="1777" y="413.5" font-size="12" fill="#1a87d0">W/㎡</text><path d="M880.00 585.00 C882.61 585.00 882.61 585.00 885.22 585.00 C887.83 585.00 887.83 585.00 890.44 585.00 C893.06 585.00 893.06 585.00 895.67 585.00 C898.28 585.00 898.28 585.00 900.89 585.00 C903.50 585.00 903.50 585.00 906.11 585.00 C908.72 585.00 908.72 585.00 911.33 585.00 C913.94 585.00 913.94 585.00 916.55 585.00 C919.16 585.00 919.16 585.00 921.78 585.00 C924.39 585.00 924.39 585.00 927.00 585.00 C929.61 585.00 929.61 585.00 932.22 585.00 C934.83 585.00 934.83 585.00 937.44 585.00 C940.05 585.00 940.05 585.00 942.66 585.00 C945.27 585.00 945.27 585.00 947.89 585.00 C950.50 585.00 950.50 585.00 953.11 585.00 C955.72 585.00 955.72 585.00 958.33 585.00 C960.94 585.00 960.94 585.00 963.55 585.00 C966.16 585.00 966.16 585.00 968.77 585.00 C971.38 585.00 971.38 585.00 974.00 585.00 C976.61 585.00 976.61 585.00 979.22 585.00 C981.83 585.00 981.83 585.00 984.44 585.00 C987.05 585.00 987.05 585.00 989.66 585.00 C992.27 585.00 992.27 585.00 994.88 585.00 C997.50 585.00 997.50 585.00 1000.11 585.00 C1002.72 585.00 1002.72 585.00 1005.33 585.00 C1007.94 585.00 1007.94 585.00 1010.55 585.00 C1013.16 585.00 1013.16 585.00 1015.77 585.00 C1018.38 585.00 1018.38 585.00 1020.99 585.00 C1023.61 585.00 1023.61 585.00 1026.22 585.00 C1028.83 585.00 1028.83 585.00 1031.44 585.00 C1034.05 585.00 1034.05 585.00 1036.66 585.00 C1039.27 585.00 1039.27 585.00 1041.88 585.00 C1044.49 585.00 1044.49 585.00 1047.10 585.00 C1049.72 585.00 1049.72 585.00 1052.33 585.00 C1054.94 585.00 1054.94 585.00 1057.55 585.00 C1060.16 585.00 1060.16 585.00 1062.77 585.00 C1065.38 585.00 1065.38 585.00 1067.99 585.00 C1070.60 585.00 1070.60 585.00 1073.21 585.00 C1075.82 585.00 1075.82 585.00 1078.44 585.00 C1081.05 585.00 1081.05 585.00 1083.66 585.00 C1086.27 585.00 1086.27 585.00 1088.88 585.00 C1091.49 585.00 1091.49 585.00 1094.10 585.00 C1096.71 585.00 1096.71 585.00 1099.32 585.00 C1101.93 585.00 1101.93 585.00 1104.55 585.00 C1107.16 585.00 1107.16 585.00 1109.77 585.00 C1112.38 585.00 1112.38 585.00 1114.99 585.00 C1117.60 585.00 1117.60 585.00 1120.21 585.00 C1122.82 585.00 1122.82 585.00 1125.43 585.00 C1128.05 585.00 1128.05 585.00 1130.66 585.00 C1133.27 585.00 1133.27 585.00 1135.88 585.00 C1138.49 585.00 1138.49 585.00 1141.10 585.00 C1143.71 585.00 1143.71 585.00 1146.32 585.00 C1148.93 585.00 1148.93 585.00 1151.54 585.00 C1154.16 585.00 1154.16 585.00 1156.77 585.00 C1159.38 585.00 1159.38 585.00 1161.99 585.00 C1164.60 585.00 1164.60 585.00 1167.21 585.00 C1169.82 585.00 1169.82 585.00 1172.43 585.00 C1175.04 585.00 1175.04 585.00 1177.65 585.00 C1180.26 585.00 1180.26 585.00 1182.88 585.00 C1185.49 585.00 1185.49 585.00 1188.10 585.00 C1190.71 585.00 1190.71 585.00 1193.32 585.00 C1195.93 585.00 1195.93 585.00 1198.54 585.00 C1201.15 585.00 1201.15 585.00 1203.76 585.00 C1206.38 585.00 1206.38 585.00 1208.99 585.00 C1211.60 585.00 1211.60 585.00 1214.21 585.00 C1216.82 585.00 1216.86 585.34 1219.43 585.00 C1222.09 584.64 1222.05 584.32 1224.65 583.60 C1227.27 582.87 1227.22 582.63 1229.87 582.10 C1232.44 581.58 1232.51 581.95 1235.10 581.50 C1237.73 581.05 1237.70 580.85 1240.32 580.30 C1242.92 579.75 1242.91 579.70 1245.54 579.30 C1248.14 578.90 1248.22 579.29 1250.76 578.70 C1253.44 578.09 1253.42 577.93 1255.98 576.90 C1258.65 575.83 1258.50 575.43 1261.21 574.50 C1263.73 573.63 1263.86 574.06 1266.43 573.30 C1269.09 572.51 1269.03 572.33 1271.65 571.40 C1274.25 570.48 1274.31 570.63 1276.87 569.60 C1279.53 568.53 1279.43 568.27 1282.09 567.20 C1284.65 566.17 1284.76 566.43 1287.32 565.40 C1289.98 564.33 1289.94 564.22 1292.54 563.00 C1295.16 561.77 1295.09 561.60 1297.76 560.50 C1300.31 559.45 1300.48 559.85 1302.98 558.70 C1305.71 557.45 1305.59 557.20 1308.20 555.70 C1310.82 554.20 1310.78 554.14 1313.43 552.70 C1316.01 551.29 1315.88 550.64 1318.65 550.00 C1321.11 549.44 1321.27 550.08 1323.87 550.30 C1326.49 550.53 1327.10 552.07 1329.09 550.90 C1332.32 549.00 1331.16 546.81 1334.31 544.17 C1336.38 542.43 1337.45 543.87 1339.54 542.15 C1342.67 539.56 1342.63 534.63 1344.76 535.54 C1347.85 536.86 1347.61 547.21 1349.98 546.61 C1352.83 545.89 1351.63 536.12 1355.20 532.89 C1356.85 531.41 1359.13 539.12 1360.42 537.19 C1364.35 531.35 1361.54 524.37 1365.65 517.36 C1366.76 515.44 1368.26 518.35 1370.87 519.34 C1373.48 520.33 1375.43 518.78 1376.09 521.32 C1380.66 539.03 1378.81 560.63 1381.31 559.83 C1384.03 558.97 1383.81 518.97 1386.53 518.02 C1389.03 517.15 1389.74 560.58 1391.76 556.20 C1394.96 549.26 1393.14 509.81 1396.98 495.37 C1398.37 490.14 1398.06 509.33 1402.20 516.86 C1403.28 518.83 1406.07 516.73 1407.42 514.38 C1411.29 507.64 1409.09 502.05 1412.64 498.68 C1414.32 497.09 1417.09 500.74 1417.87 504.46 C1422.31 525.78 1420.73 550.93 1423.09 548.76 C1425.95 546.13 1425.63 495.64 1428.31 494.88 C1430.85 494.15 1428.91 521.43 1433.53 545.79 C1434.13 548.95 1436.45 547.55 1438.75 549.92 C1441.67 552.92 1441.16 553.41 1443.98 556.53 C1446.38 559.19 1448.18 563.86 1449.20 561.49 C1453.40 551.71 1450.10 542.97 1454.42 532.23 C1455.32 530.00 1458.11 533.01 1459.64 535.54 C1463.33 541.60 1461.72 542.75 1464.86 549.42 C1466.94 553.82 1469.25 561.11 1470.09 557.69 C1474.47 539.63 1472.67 506.74 1475.31 506.45 C1477.89 506.16 1475.83 533.05 1480.53 556.53 C1481.06 559.16 1485.26 561.12 1485.75 558.68 C1490.48 535.25 1487.67 512.00 1490.97 504.79 C1492.90 500.60 1494.42 540.93 1496.20 535.87 C1499.64 526.06 1498.98 473.03 1501.42 475.04 C1504.20 477.33 1501.89 514.90 1506.64 544.46 C1507.11 547.38 1509.42 542.40 1511.86 540.00 C1514.64 537.28 1516.51 537.99 1517.08 534.21 C1521.73 503.53 1519.77 470.19 1522.31 471.07 C1524.99 472.01 1525.04 539.43 1527.53 537.85 C1530.26 536.12 1528.62 486.01 1532.75 464.46 C1533.85 458.74 1536.79 473.63 1537.97 483.31 C1542.01 516.36 1539.36 534.14 1543.19 549.92 C1544.58 555.63 1545.44 528.02 1548.42 526.28 C1550.66 524.97 1550.56 542.05 1553.64 543.80 C1555.78 545.02 1558.00 538.47 1558.86 532.23 C1563.22 500.78 1561.85 463.83 1564.08 468.43 C1567.07 474.57 1566.75 554.66 1569.30 553.73 C1571.97 552.76 1569.59 506.96 1574.53 464.64 C1574.82 462.15 1579.41 461.66 1579.75 464.09 C1584.63 499.57 1581.53 528.31 1584.97 540.45 C1586.76 546.77 1586.93 520.61 1590.19 501.00 C1592.15 489.25 1591.41 488.59 1595.41 477.73 C1596.64 474.41 1597.96 472.78 1600.64 472.64 C1603.18 472.50 1605.31 473.86 1605.86 477.18 C1610.53 505.49 1606.33 507.97 1611.08 535.91 C1611.55 538.70 1615.95 541.28 1616.30 538.64 C1621.17 502.19 1616.63 496.33 1621.52 457.73 C1621.85 455.15 1626.43 453.77 1626.75 456.27 C1631.65 495.14 1627.70 513.50 1631.97 540.45 C1632.92 546.50 1633.78 525.42 1637.19 522.27 C1639.00 520.60 1641.07 526.06 1642.41 530.82 C1646.29 544.52 1644.57 556.62 1647.63 559.18 C1649.79 560.99 1651.56 549.59 1652.86 539.55 C1656.78 509.05 1654.82 485.74 1658.08 478.09 C1660.05 473.47 1659.45 505.88 1663.30 515.00 C1664.67 518.24 1667.01 499.93 1668.52 502.82 C1672.23 509.93 1669.44 519.85 1673.74 535.00 C1674.66 538.22 1678.37 542.34 1678.97 539.55 C1683.59 517.79 1681.84 483.14 1684.19 485.91 C1687.07 489.32 1686.70 550.63 1689.41 551.91 C1691.92 553.09 1691.75 493.98 1694.63 490.82 C1696.98 488.25 1697.67 544.53 1699.85 540.45 C1702.89 534.80 1702.12 476.00 1705.08 471.36 C1707.34 467.82 1705.55 499.71 1710.30 524.09 C1710.77 526.53 1713.85 523.26 1715.52 525.00 C1719.07 528.71 1718.04 534.76 1720.74 535.00 C1723.26 535.22 1723.92 524.66 1725.96 525.91 C1729.14 527.85 1728.19 533.79 1731.19 541.36 C1733.41 546.98 1732.80 549.01 1736.41 552.27 C1738.02 553.74 1739.01 551.50 1741.63 550.82 C1744.23 550.14 1745.90 551.81 1746.85 549.55 C1751.13 539.35 1750.08 537.84 1752.07 525.91 C1755.30 506.65 1754.70 487.05 1757.30 487.18 C1759.92 487.32 1759.29 506.93 1762.52 526.45 C1764.52 538.56 1766.35 556.25 1767.74 550.45 C1771.57 534.44 1770.22 484.49 1772.96 482.82 C1775.44 481.31 1775.56 543.91 1778.18 544.09 C1780.78 544.27 1778.73 508.56 1783.41 483.55 C1783.95 480.65 1786.02 485.91 1788.63 488.27" fill="none" stroke="#f9a835" stroke-width="2"/><path d="M880.00 585.00 C882.61 585.00 882.61 585.00 885.22 585.00 C887.83 585.00 887.83 585.00 890.44 585.00 C893.06 585.00 893.06 585.00 895.67 585.00 C898.28 585.00 898.28 585.00 900.89 585.00 C903.50 585.00 903.50 585.00 906.11 585.00 C908.72 585.00 908.72 585.00 911.33 585.00 C913.94 585.00 913.94 585.00 916.55 585.00 C919.16 585.00 919.16 585.00 921.78 585.00 C924.39 585.00 924.39 585.00 927.00 585.00 C929.61 585.00 929.61 585.00 932.22 585.00 C934.83 585.00 934.83 585.00 937.44 585.00 C940.05 585.00 940.05 585.00 942.66 585.00 C945.27 585.00 945.27 585.00 947.89 585.00 C950.50 585.00 950.50 585.00 953.11 585.00 C955.72 585.00 955.72 585.00 958.33 585.00 C960.94 585.00 960.94 585.00 963.55 585.00 C966.16 585.00 966.16 585.00 968.77 585.00 C971.38 585.00 971.38 585.00 974.00 585.00 C976.61 585.00 976.61 585.00 979.22 585.00 C981.83 585.00 981.83 585.00 984.44 585.00 C987.05 585.00 987.05 585.00 989.66 585.00 C992.27 585.00 992.27 585.00 994.88 585.00 C997.50 585.00 997.50 585.00 1000.11 585.00 C1002.72 585.00 1002.72 585.00 1005.33 585.00 C1007.94 585.00 1007.94 585.00 1010.55 585.00 C1013.16 585.00 1013.16 585.00 1015.77 585.00 C1018.38 585.00 1018.38 585.00 1020.99 585.00 C1023.61 585.00 1023.61 585.00 1026.22 585.00 C1028.83 585.00 1028.83 585.00 1031.44 585.00 C1034.05 585.00 1034.05 585.00 1036.66 585.00 C1039.27 585.00 1039.27 585.00 1041.88 585.00 C1044.49 585.00 1044.49 585.00 1047.10 585.00 C1049.72 585.00 1049.72 585.00 1052.33 585.00 C1054.94 585.00 1054.94 585.00 1057.55 585.00 C1060.16 585.00 1060.16 585.00 1062.77 585.00 C1065.38 585.00 1065.38 585.00 1067.99 585.00 C1070.60 585.00 1070.60 585.00 1073.21 585.00 C1075.82 585.00 1075.82 585.00 1078.44 585.00 C1081.05 585.00 1081.05 585.00 1083.66 585.00 C1086.27 585.00 1086.27 585.00 1088.88 585.00 C1091.49 585.00 1091.49 585.00 1094.10 585.00 C1096.71 585.00 1096.71 585.00 1099.32 585.00 C1101.93 585.00 1101.93 585.00 1104.55 585.00 C1107.16 585.00 1107.16 585.00 1109.77 585.00 C1112.38 585.00 1112.38 585.00 1114.99 585.00 C1117.60 585.00 1117.60 585.00 1120.21 585.00 C1122.82 585.00 1122.82 585.00 1125.43 585.00 C1128.05 585.00 1128.05 585.00 1130.66 585.00 C1133.27 585.00 1133.27 585.00 1135.88 585.00 C1138.49 585.00 1138.49 585.00 1141.10 585.00 C1143.71 585.00 1143.71 585.00 1146.32 585.00 C1148.93 585.00 1148.93 585.00 1151.54 585.00 C1154.16 585.00 1154.16 585.00 1156.77 585.00 C1159.38 585.00 1159.38 585.00 1161.99 585.00 C1164.60 585.00 1164.60 585.00 1167.21 585.00 C1169.82 585.00 1169.82 585.00 1172.43 585.00 C1175.04 585.00 1175.04 585.00 1177.65 585.00 C1180.26 585.00 1180.26 585.00 1182.88 585.00 C1185.49 585.00 1185.49 585.00 1188.10 585.00 C1190.71 585.00 1190.71 585.00 1193.32 585.00 C1195.93 585.00 1195.94 585.12 1198.54 585.00 C1201.16 584.88 1201.15 584.77 1203.76 584.53 C1206.38 584.30 1206.38 584.30 1208.99 584.07 C1211.60 583.83 1211.62 583.98 1214.21 583.60 C1216.84 583.22 1216.82 583.07 1219.43 582.55 C1222.04 582.02 1222.07 582.15 1224.65 581.50 C1227.30 580.83 1227.21 580.46 1229.87 579.90 C1232.43 579.36 1232.60 580.02 1235.10 579.30 C1237.82 578.52 1237.62 577.83 1240.32 576.90 C1242.84 576.03 1242.90 576.15 1245.54 575.70 C1248.13 575.25 1248.27 575.82 1250.76 575.10 C1253.49 574.32 1253.44 574.04 1255.98 572.70 C1258.67 571.29 1258.47 570.88 1261.21 569.60 C1263.69 568.43 1263.82 568.70 1266.43 567.80 C1269.04 566.90 1269.15 567.15 1271.65 566.00 C1274.37 564.75 1274.26 564.50 1276.87 563.00 C1279.48 561.50 1279.34 561.14 1282.09 560.00 C1284.56 558.99 1284.94 559.86 1287.32 558.70 C1290.16 557.31 1289.78 556.56 1292.54 554.90 C1295.01 553.41 1295.14 553.63 1297.76 552.40 C1300.36 551.18 1300.55 551.49 1302.98 550.00 C1305.77 548.29 1305.62 548.03 1308.20 546.00 C1310.84 543.93 1310.56 543.44 1313.43 541.80 C1315.79 540.44 1316.00 540.79 1318.65 540.00 C1321.22 539.24 1322.09 540.46 1323.87 538.70 C1327.31 535.31 1325.66 532.16 1329.09 529.70 C1330.88 528.41 1331.68 530.57 1334.31 531.20 C1336.90 531.83 1337.90 533.70 1339.54 532.23 C1343.12 529.01 1341.92 522.40 1344.76 521.82 C1347.14 521.33 1346.78 526.54 1349.98 530.08 C1352.00 532.32 1353.73 530.83 1355.20 533.39 C1358.95 539.92 1357.34 546.70 1360.42 548.26 C1362.56 549.35 1364.39 543.93 1365.65 538.68 C1369.62 522.03 1368.28 504.34 1370.87 504.46 C1373.50 504.59 1372.54 522.04 1376.09 539.17 C1377.76 547.25 1379.03 555.96 1381.31 554.88 C1384.25 553.48 1383.03 538.09 1386.53 534.21 C1388.26 532.31 1390.62 546.39 1391.76 543.31 C1395.85 532.17 1392.98 524.12 1396.98 505.79 C1398.21 500.15 1401.08 491.94 1402.20 495.37 C1406.30 507.97 1405.10 540.24 1407.42 537.85 C1410.32 534.87 1407.92 509.62 1412.64 484.63 C1413.14 482.02 1417.36 480.23 1417.87 482.64 C1422.58 505.03 1420.51 534.54 1423.09 534.21 C1425.73 533.88 1425.64 481.96 1428.31 481.32 C1430.86 480.72 1429.01 507.38 1433.53 531.74 C1434.23 535.48 1436.61 534.30 1438.75 537.52 C1441.83 542.15 1440.80 542.91 1443.98 547.44 C1446.02 550.35 1447.98 554.51 1449.20 552.40 C1453.20 545.42 1451.67 540.79 1454.42 529.26 C1456.89 518.89 1457.57 506.36 1459.64 508.60 C1462.79 511.98 1460.88 525.05 1464.86 540.50 C1466.10 545.30 1469.40 552.88 1470.09 549.09 C1474.62 523.96 1472.26 488.18 1475.31 482.64 C1477.49 478.68 1476.75 506.60 1480.53 530.08 C1481.97 539.00 1484.56 552.43 1485.75 547.44 C1489.78 530.53 1486.58 507.72 1490.97 486.28 C1491.80 482.26 1494.26 498.12 1496.20 496.53 C1499.48 493.82 1499.75 474.10 1501.42 477.69 C1504.97 485.33 1503.87 517.69 1506.64 519.01 C1509.09 520.17 1507.96 500.44 1511.86 482.64 C1513.18 476.64 1513.48 475.96 1517.08 471.40 C1518.71 469.35 1521.96 466.88 1522.31 469.42 C1527.18 505.31 1524.56 542.92 1527.53 548.26 C1529.79 552.34 1529.27 518.15 1532.75 488.26 C1534.49 473.27 1536.57 451.47 1537.97 458.51 C1541.79 477.75 1538.61 509.20 1543.19 540.83 C1543.83 545.24 1544.90 533.36 1548.42 530.58 C1550.12 529.23 1552.45 534.41 1553.64 532.56 C1557.67 526.31 1554.78 521.16 1558.86 514.38 C1560.00 512.48 1563.10 513.04 1564.08 515.21 C1568.32 524.53 1568.10 543.56 1569.30 537.36 C1573.32 516.64 1570.10 488.16 1574.53 461.36 C1575.32 456.52 1578.51 467.37 1579.75 474.09 C1583.73 495.73 1582.62 520.34 1584.97 518.09 C1587.84 515.34 1586.13 479.44 1590.19 464.09 C1591.35 459.72 1594.36 471.02 1595.41 478.64 C1599.58 508.75 1598.46 544.59 1600.64 539.55 C1603.68 532.50 1602.96 459.09 1605.86 454.45 C1608.19 450.73 1606.84 501.21 1611.08 522.82 C1612.07 527.85 1615.09 515.58 1616.30 507.73 C1620.31 481.67 1617.98 464.56 1621.52 455.00 C1623.20 450.47 1624.85 467.15 1626.75 479.55 C1630.07 501.25 1630.00 528.57 1631.97 523.18 C1635.22 514.30 1632.53 480.01 1637.19 451.00 C1637.76 447.47 1641.91 453.78 1642.41 458.09 C1647.13 498.51 1642.74 501.01 1647.63 540.45 C1647.96 543.10 1652.21 544.56 1652.86 542.27 C1657.43 526.11 1654.04 514.59 1658.08 503.55 C1659.26 500.31 1660.43 513.08 1663.30 513.73 C1665.66 514.26 1665.91 505.91 1668.52 505.91 C1671.13 505.91 1672.03 509.40 1673.74 513.73 C1677.25 522.59 1677.05 534.88 1678.97 532.27 C1682.27 527.79 1681.80 498.09 1684.19 499.55 C1687.03 501.27 1685.72 530.28 1689.41 538.64 C1690.94 542.09 1690.73 528.27 1694.63 523.18 C1695.95 521.46 1699.42 527.45 1699.85 525.00 C1704.65 497.64 1702.29 465.58 1705.08 463.55 C1707.52 461.76 1706.43 504.16 1710.30 517.36 C1711.65 521.98 1712.20 501.96 1715.52 499.18 C1717.42 497.60 1719.56 511.69 1720.74 508.64 C1724.78 498.24 1723.68 469.96 1725.96 472.27 C1728.90 475.24 1727.46 495.95 1731.19 519.18 C1732.68 528.49 1732.62 528.99 1736.41 537.36 C1737.84 540.54 1739.88 543.67 1741.63 542.27 C1745.11 539.49 1745.85 536.01 1746.85 529.00 C1751.07 499.38 1748.72 477.57 1752.07 469.00 C1753.95 464.21 1754.09 498.37 1757.30 502.27 C1759.31 504.73 1761.12 476.74 1762.52 481.73 C1766.34 495.38 1764.69 534.60 1767.74 539.55 C1769.91 543.06 1768.55 518.23 1772.96 498.64 C1773.77 495.05 1776.47 496.46 1778.18 493.18 C1781.69 486.46 1780.04 485.49 1783.41 478.64 C1785.26 474.86 1786.02 475.27 1788.63 471.91" fill="none" stroke="#5ab6f2" stroke-width="2"/><g fill="#f9a835"><circle cx="880.0" cy="585.0" r="1.8"/><circle cx="885.2" cy="585.0" r="1.8"/><circle cx="890.4" cy="585.0" r="1.8"/><circle cx="895.7" cy="585.0" r="1.8"/><circle cx="900.9" cy="585.0" r="1.8"/><circle cx="906.1" cy="585.0" r="1.8"/><circle cx="911.3" cy="585.0" r="1.8"/><circle cx="916.6" cy="585.0" r="1.8"/><circle cx="921.8" cy="585.0" r="1.8"/><circle cx="927.0" cy="585.0" r="1.8"/><circle cx="932.2" cy="585.0" r="1.8"/><circle cx="937.4" cy="585.0" r="1.8"/><circle cx="942.7" cy="585.0" r="1.8"/><circle cx="947.9" cy="585.0" r="1.8"/><circle cx="953.1" cy="585.0" r="1.8"/><circle cx="958.3" cy="585.0" r="1.8"/><circle cx="963.6" cy="585.0" r="1.8"/><circle cx="968.8" cy="585.0" r="1.8"/><circle cx="974.0" cy="585.0" r="1.8"/><circle cx="979.2" cy="585.0" r="1.8"/><circle cx="984.4" cy="585.0" r="1.8"/><circle cx="989.7" cy="585.0" r="1.8"/><circle cx="994.9" cy="585.0" r="1.8"/><circle cx="1000.1" cy="585.0" r="1.8"/><circle cx="1005.3" cy="585.0" r="1.8"/><circle cx="1010.5" cy="585.0" r="1.8"/><circle cx="1015.8" cy="585.0" r="1.8"/><circle cx="1021.0" cy="585.0" r="1.8"/><circle cx="1026.2" cy="585.0" r="1.8"/><circle cx="1031.4" cy="585.0" r="1.8"/><circle cx="1036.7" cy="585.0" r="1.8"/><circle cx="1041.9" cy="585.0" r="1.8"/><circle cx="1047.1" cy="585.0" r="1.8"/><circle cx="1052.3" cy="585.0" r="1.8"/><circle cx="1057.5" cy="585.0" r="1.8"/><circle cx="1062.8" cy="585.0" r="1.8"/><circle cx="1068.0" cy="585.0" r="1.8"/><circle cx="1073.2" cy="585.0" r="1.8"/><circle cx="1078.4" cy="585.0" r="1.8"/><circle cx="1083.7" cy="585.0" r="1.8"/><circle cx="1088.9" cy="585.0" r="1.8"/><circle cx="1094.1" cy="585.0" r="1.8"/><circle cx="1099.3" cy="585.0" r="1.8"/><circle cx="1104.5" cy="585.0" r="1.8"/><circle cx="1109.8" cy="585.0" r="1.8"/><circle cx="1115.0" cy="585.0" r="1.8"/><circle cx="1120.2" cy="585.0" r="1.8"/><circle cx="1125.4" cy="585.0" r="1.8"/><circle cx="1130.7" cy="585.0" r="1.8"/><circle cx="1135.9" cy="585.0" r="1.8"/><circle cx="1141.1" cy="585.0" r="1.8"/><circle cx="1146.3" cy="585.0" r="1.8"/><circle cx="1151.5" cy="585.0" r="1.8"/><circle cx="1156.8" cy="585.0" r="1.8"/><circle cx="1162.0" cy="585.0" r="1.8"/><circle cx="1167.2" cy="585.0" r="1.8"/><circle cx="1172.4" cy="585.0" r="1.8"/><circle cx="1177.7" cy="585.0" r="1.8"/><circle cx="1182.9" cy="585.0" r="1.8"/><circle cx="1188.1" cy="585.0" r="1.8"/><circle cx="1193.3" cy="585.0" r="1.8"/><circle cx="1198.5" cy="585.0" r="1.8"/><circle cx="1203.8" cy="585.0" r="1.8"/><circle cx="1209.0" cy="585.0" r="1.8"/><circle cx="1214.2" cy="585.0" r="1.8"/><circle cx="1219.4" cy="585.0" r="1.8"/><circle cx="1224.7" cy="583.6" r="1.8"/><circle cx="1229.9" cy="582.1" r="1.8"/><circle cx="1235.1" cy="581.5" r="1.8"/><circle cx="1240.3" cy="580.3" r="1.8"/><circle cx="1245.5" cy="579.3" r="1.8"/><circle cx="1250.8" cy="578.7" r="1.8"/><circle cx="1256.0" cy="576.9" r="1.8"/><circle cx="1261.2" cy="574.5" r="1.8"/><circle cx="1266.4" cy="573.3" r="1.8"/><circle cx="1271.7" cy="571.4" r="1.8"/><circle cx="1276.9" cy="569.6" r="1.8"/><circle cx="1282.1" cy="567.2" r="1.8"/><circle cx="1287.3" cy="565.4" r="1.8"/><circle cx="1292.5" cy="563.0" r="1.8"/><circle cx="1297.8" cy="560.5" r="1.8"/><circle cx="1303.0" cy="558.7" r="1.8"/><circle cx="1308.2" cy="555.7" r="1.8"/><circle cx="1313.4" cy="552.7" r="1.8"/><circle cx="1318.6" cy="550.0" r="1.8"/><circle cx="1323.9" cy="550.3" r="1.8"/><circle cx="1329.1" cy="550.9" r="1.8"/><circle cx="1334.3" cy="544.2" r="1.8"/><circle cx="1339.5" cy="542.1" r="1.8"/><circle cx="1344.8" cy="535.5" r="1.8"/><circle cx="1350.0" cy="546.6" r="1.8"/><circle cx="1355.2" cy="532.9" r="1.8"/><circle cx="1360.4" cy="537.2" r="1.8"/><circle cx="1365.6" cy="517.4" r="1.8"/><circle cx="1370.9" cy="519.3" r="1.8"/><circle cx="1376.1" cy="521.3" r="1.8"/><circle cx="1381.3" cy="559.8" r="1.8"/><circle cx="1386.5" cy="518.0" r="1.8"/><circle cx="1391.8" cy="556.2" r="1.8"/><circle cx="1397.0" cy="495.4" r="1.8"/><circle cx="1402.2" cy="516.9" r="1.8"/><circle cx="1407.4" cy="514.4" r="1.8"/><circle cx="1412.6" cy="498.7" r="1.8"/><circle cx="1417.9" cy="504.5" r="1.8"/><circle cx="1423.1" cy="548.8" r="1.8"/><circle cx="1428.3" cy="494.9" r="1.8"/><circle cx="1433.5" cy="545.8" r="1.8"/><circle cx="1438.8" cy="549.9" r="1.8"/><circle cx="1444.0" cy="556.5" r="1.8"/><circle cx="1449.2" cy="561.5" r="1.8"/><circle cx="1454.4" cy="532.2" r="1.8"/><circle cx="1459.6" cy="535.5" r="1.8"/><circle cx="1464.9" cy="549.4" r="1.8"/><circle cx="1470.1" cy="557.7" r="1.8"/><circle cx="1475.3" cy="506.4" r="1.8"/><circle cx="1480.5" cy="556.5" r="1.8"/><circle cx="1485.8" cy="558.7" r="1.8"/><circle cx="1491.0" cy="504.8" r="1.8"/><circle cx="1496.2" cy="535.9" r="1.8"/><circle cx="1501.4" cy="475.0" r="1.8"/><circle cx="1506.6" cy="544.5" r="1.8"/><circle cx="1511.9" cy="540.0" r="1.8"/><circle cx="1517.1" cy="534.2" r="1.8"/><circle cx="1522.3" cy="471.1" r="1.8"/><circle cx="1527.5" cy="537.9" r="1.8"/><circle cx="1532.8" cy="464.5" r="1.8"/><circle cx="1538.0" cy="483.3" r="1.8"/><circle cx="1543.2" cy="549.9" r="1.8"/><circle cx="1548.4" cy="526.3" r="1.8"/><circle cx="1553.6" cy="543.8" r="1.8"/><circle cx="1558.9" cy="532.2" r="1.8"/><circle cx="1564.1" cy="468.4" r="1.8"/><circle cx="1569.3" cy="553.7" r="1.8"/><circle cx="1574.5" cy="464.6" r="1.8"/><circle cx="1579.7" cy="464.1" r="1.8"/><circle cx="1585.0" cy="540.5" r="1.8"/><circle cx="1590.2" cy="501.0" r="1.8"/><circle cx="1595.4" cy="477.7" r="1.8"/><circle cx="1600.6" cy="472.6" r="1.8"/><circle cx="1605.9" cy="477.2" r="1.8"/><circle cx="1611.1" cy="535.9" r="1.8"/><circle cx="1616.3" cy="538.6" r="1.8"/><circle cx="1621.5" cy="457.7" r="1.8"/><circle cx="1626.7" cy="456.3" r="1.8"/><circle cx="1632.0" cy="540.5" r="1.8"/><circle cx="1637.2" cy="522.3" r="1.8"/><circle cx="1642.4" cy="530.8" r="1.8"/><circle cx="1647.6" cy="559.2" r="1.8"/><circle cx="1652.9" cy="539.5" r="1.8"/><circle cx="1658.1" cy="478.1" r="1.8"/><circle cx="1663.3" cy="515.0" r="1.8"/><circle cx="1668.5" cy="502.8" r="1.8"/><circle cx="1673.7" cy="535.0" r="1.8"/><circle cx="1679.0" cy="539.5" r="1.8"/><circle cx="1684.2" cy="485.9" r="1.8"/><circle cx="1689.4" cy="551.9" r="1.8"/><circle cx="1694.6" cy="490.8" r="1.8"/><circle cx="1699.9" cy="540.5" r="1.8"/><circle cx="1705.1" cy="471.4" r="1.8"/><circle cx="1710.3" cy="524.1" r="1.8"/><circle cx="1715.5" cy="525.0" r="1.8"/><circle cx="1720.7" cy="535.0" r="1.8"/><circle cx="1726.0" cy="525.9" r="1.8"/><circle cx="1731.2" cy="541.4" r="1.8"/><circle cx="1736.4" cy="552.3" r="1.8"/><circle cx="1741.6" cy="550.8" r="1.8"/><circle cx="1746.9" cy="549.5" r="1.8"/><circle cx="1752.1" cy="525.9" r="1.8"/><circle cx="1757.3" cy="487.2" r="1.8"/><circle cx="1762.5" cy="526.5" r="1.8"/><circle cx="1767.7" cy="550.5" r="1.8"/><circle cx="1773.0" cy="482.8" r="1.8"/><circle cx="1778.2" cy="544.1" r="1.8"/><circle cx="1783.4" cy="483.5" r="1.8"/><circle cx="1788.6" cy="488.3" r="1.8"/></g><g fill="#5ab6f2"><circle cx="880.0" cy="585.0" r="1.8"/><circle cx="885.2" cy="585.0" r="1.8"/><circle cx="890.4" cy="585.0" r="1.8"/><circle cx="895.7" cy="585.0" r="1.8"/><circle cx="900.9" cy="585.0" r="1.8"/><circle cx="906.1" cy="585.0" r="1.8"/><circle cx="911.3" cy="585.0" r="1.8"/><circle cx="916.6" cy="585.0" r="1.8"/><circle cx="921.8" cy="585.0" r="1.8"/><circle cx="927.0" cy="585.0" r="1.8"/><circle cx="932.2" cy="585.0" r="1.8"/><circle cx="937.4" cy="585.0" r="1.8"/><circle cx="942.7" cy="585.0" r="1.8"/><circle cx="947.9" cy="585.0" r="1.8"/><circle cx="953.1" cy="585.0" r="1.8"/><circle cx="958.3" cy="585.0" r="1.8"/><circle cx="963.6" cy="585.0" r="1.8"/><circle cx="968.8" cy="585.0" r="1.8"/><circle cx="974.0" cy="585.0" r="1.8"/><circle cx="979.2" cy="585.0" r="1.8"/><circle cx="984.4" cy="585.0" r="1.8"/><circle cx="989.7" cy="585.0" r="1.8"/><circle cx="994.9" cy="585.0" r="1.8"/><circle cx="1000.1" cy="585.0" r="1.8"/><circle cx="1005.3" cy="585.0" r="1.8"/><circle cx="1010.5" cy="585.0" r="1.8"/><circle cx="1015.8" cy="585.0" r="1.8"/><circle cx="1021.0" cy="585.0" r="1.8"/><circle cx="1026.2" cy="585.0" r="1.8"/><circle cx="1031.4" cy="585.0" r="1.8"/><circle cx="1036.7" cy="585.0" r="1.8"/><circle cx="1041.9" cy="585.0" r="1.8"/><circle cx="1047.1" cy="585.0" r="1.8"/><circle cx="1052.3" cy="585.0" r="1.8"/><circle cx="1057.5" cy="585.0" r="1.8"/><circle cx="1062.8" cy="585.0" r="1.8"/><circle cx="1068.0" cy="585.0" r="1.8"/><circle cx="1073.2" cy="585.0" r="1.8"/><circle cx="1078.4" cy="585.0" r="1.8"/><circle cx="1083.7" cy="585.0" r="1.8"/><circle cx="1088.9" cy="585.0" r="1.8"/><circle cx="1094.1" cy="585.0" r="1.8"/><circle cx="1099.3" cy="585.0" r="1.8"/><circle cx="1104.5" cy="585.0" r="1.8"/><circle cx="1109.8" cy="585.0" r="1.8"/><circle cx="1115.0" cy="585.0" r="1.8"/><circle cx="1120.2" cy="585.0" r="1.8"/><circle cx="1125.4" cy="585.0" r="1.8"/><circle cx="1130.7" cy="585.0" r="1.8"/><circle cx="1135.9" cy="585.0" r="1.8"/><circle cx="1141.1" cy="585.0" r="1.8"/><circle cx="1146.3" cy="585.0" r="1.8"/><circle cx="1151.5" cy="585.0" r="1.8"/><circle cx="1156.8" cy="585.0" r="1.8"/><circle cx="1162.0" cy="585.0" r="1.8"/><circle cx="1167.2" cy="585.0" r="1.8"/><circle cx="1172.4" cy="585.0" r="1.8"/><circle cx="1177.7" cy="585.0" r="1.8"/><circle cx="1182.9" cy="585.0" r="1.8"/><circle cx="1188.1" cy="585.0" r="1.8"/><circle cx="1193.3" cy="585.0" r="1.8"/><circle cx="1198.5" cy="585.0" r="1.8"/><circle cx="1203.8" cy="584.5" r="1.8"/><circle cx="1209.0" cy="584.1" r="1.8"/><circle cx="1214.2" cy="583.6" r="1.8"/><circle cx="1219.4" cy="582.5" r="1.8"/><circle cx="1224.7" cy="581.5" r="1.8"/><circle cx="1229.9" cy="579.9" r="1.8"/><circle cx="1235.1" cy="579.3" r="1.8"/><circle cx="1240.3" cy="576.9" r="1.8"/><circle cx="1245.5" cy="575.7" r="1.8"/><circle cx="1250.8" cy="575.1" r="1.8"/><circle cx="1256.0" cy="572.7" r="1.8"/><circle cx="1261.2" cy="569.6" r="1.8"/><circle cx="1266.4" cy="567.8" r="1.8"/><circle cx="1271.7" cy="566.0" r="1.8"/><circle cx="1276.9" cy="563.0" r="1.8"/><circle cx="1282.1" cy="560.0" r="1.8"/><circle cx="1287.3" cy="558.7" r="1.8"/><circle cx="1292.5" cy="554.9" r="1.8"/><circle cx="1297.8" cy="552.4" r="1.8"/><circle cx="1303.0" cy="550.0" r="1.8"/><circle cx="1308.2" cy="546.0" r="1.8"/><circle cx="1313.4" cy="541.8" r="1.8"/><circle cx="1318.6" cy="540.0" r="1.8"/><circle cx="1323.9" cy="538.7" r="1.8"/><circle cx="1329.1" cy="529.7" r="1.8"/><circle cx="1334.3" cy="531.2" r="1.8"/><circle cx="1339.5" cy="532.2" r="1.8"/><circle cx="1344.8" cy="521.8" r="1.8"/><circle cx="1350.0" cy="530.1" r="1.8"/><circle cx="1355.2" cy="533.4" r="1.8"/><circle cx="1360.4" cy="548.3" r="1.8"/><circle cx="1365.6" cy="538.7" r="1.8"/><circle cx="1370.9" cy="504.5" r="1.8"/><circle cx="1376.1" cy="539.2" r="1.8"/><circle cx="1381.3" cy="554.9" r="1.8"/><circle cx="1386.5" cy="534.2" r="1.8"/><circle cx="1391.8" cy="543.3" r="1.8"/><circle cx="1397.0" cy="505.8" r="1.8"/><circle cx="1402.2" cy="495.4" r="1.8"/><circle cx="1407.4" cy="537.9" r="1.8"/><circle cx="1412.6" cy="484.6" r="1.8"/><circle cx="1417.9" cy="482.6" r="1.8"/><circle cx="1423.1" cy="534.2" r="1.8"/><circle cx="1428.3" cy="481.3" r="1.8"/><circle cx="1433.5" cy="531.7" r="1.8"/><circle cx="1438.8" cy="537.5" r="1.8"/><circle cx="1444.0" cy="547.4" r="1.8"/><circle cx="1449.2" cy="552.4" r="1.8"/><circle cx="1454.4" cy="529.3" r="1.8"/><circle cx="1459.6" cy="508.6" r="1.8"/><circle cx="1464.9" cy="540.5" r="1.8"/><circle cx="1470.1" cy="549.1" r="1.8"/><circle cx="1475.3" cy="482.6" r="1.8"/><circle cx="1480.5" cy="530.1" r="1.8"/><circle cx="1485.8" cy="547.4" r="1.8"/><circle cx="1491.0" cy="486.3" r="1.8"/><circle cx="1496.2" cy="496.5" r="1.8"/><circle cx="1501.4" cy="477.7" r="1.8"/><circle cx="1506.6" cy="519.0" r="1.8"/><circle cx="1511.9" cy="482.6" r="1.8"/><circle cx="1517.1" cy="471.4" r="1.8"/><circle cx="1522.3" cy="469.4" r="1.8"/><circle cx="1527.5" cy="548.3" r="1.8"/><circle cx="1532.8" cy="488.3" r="1.8"/><circle cx="1538.0" cy="458.5" r="1.8"/><circle cx="1543.2" cy="540.8" r="1.8"/><circle cx="1548.4" cy="530.6" r="1.8"/><circle cx="1553.6" cy="532.6" r="1.8"/><circle cx="1558.9" cy="514.4" r="1.8"/><circle cx="1564.1" cy="515.2" r="1.8"/><circle cx="1569.3" cy="537.4" r="1.8"/><circle cx="1574.5" cy="461.4" r="1.8"/><circle cx="1579.7" cy="474.1" r="1.8"/><circle cx="1585.0" cy="518.1" r="1.8"/><circle cx="1590.2" cy="464.1" r="1.8"/><circle cx="1595.4" cy="478.6" r="1.8"/><circle cx="1600.6" cy="539.5" r="1.8"/><circle cx="1605.9" cy="454.5" r="1.8"/><circle cx="1611.1" cy="522.8" r="1.8"/><circle cx="1616.3" cy="507.7" r="1.8"/><circle cx="1621.5" cy="455.0" r="1.8"/><circle cx="1626.7" cy="479.5" r="1.8"/><circle cx="1632.0" cy="523.2" r="1.8"/><circle cx="1637.2" cy="451.0" r="1.8"/><circle cx="1642.4" cy="458.1" r="1.8"/><circle cx="1647.6" cy="540.5" r="1.8"/><circle cx="1652.9" cy="542.3" r="1.8"/><circle cx="1658.1" cy="503.5" r="1.8"/><circle cx="1663.3" cy="513.7" r="1.8"/><circle cx="1668.5" cy="505.9" r="1.8"/><circle cx="1673.7" cy="513.7" r="1.8"/><circle cx="1679.0" cy="532.3" r="1.8"/><circle cx="1684.2" cy="499.5" r="1.8"/><circle cx="1689.4" cy="538.6" r="1.8"/><circle cx="1694.6" cy="523.2" r="1.8"/><circle cx="1699.9" cy="525.0" r="1.8"/><circle cx="1705.1" cy="463.5" r="1.8"/><circle cx="1710.3" cy="517.4" r="1.8"/><circle cx="1715.5" cy="499.2" r="1.8"/><circle cx="1720.7" cy="508.6" r="1.8"/><circle cx="1726.0" cy="472.3" r="1.8"/><circle cx="1731.2" cy="519.2" r="1.8"/><circle cx="1736.4" cy="537.4" r="1.8"/><circle cx="1741.6" cy="542.3" r="1.8"/><circle cx="1746.9" cy="529.0" r="1.8"/><circle cx="1752.1" cy="469.0" r="1.8"/><circle cx="1757.3" cy="502.3" r="1.8"/><circle cx="1762.5" cy="481.7" r="1.8"/><circle cx="1767.7" cy="539.5" r="1.8"/><circle cx="1773.0" cy="498.6" r="1.8"/><circle cx="1778.2" cy="493.2" r="1.8"/><circle cx="1783.4" cy="478.6" r="1.8"/><circle cx="1788.6" cy="471.9" r="1.8"/></g><circle cx="1626.3" cy="456.3" r="5.3" fill="#f9a835"/><circle cx="1636.8" cy="451" r="5.3" fill="#5ab6f2"/><circle cx="880" cy="585.2" r="4.8" fill="#5ab6f2"/><text x="1614" y="438" font-size="12" fill="#999">Max:875</text><text x="1598" y="443" font-size="12" fill="#999">Max:252.6</text><text x="863.5" y="573" font-size="12" fill="#999" font-weight="bold">Min:0</text><circle cx="1289" cy="407.7" r="4.5" fill="#f9a835"/><text x="1299.5" y="411.8" font-size="12" fill="#333">功率</text><circle cx="1337.6" cy="407.7" r="4.5" fill="#5ab6f2"/><text x="1348" y="411.8" font-size="12" fill="#333">辐照度</text><g fill="none" stroke="#666" stroke-width="1">
<path d="M1632 414.5 H1646.5"/>
<path d="M1633.3 412.5 V405.6 Q1633.3 404.6 1634.3 404.6 Q1635.3 404.6 1635.3 405.6 V412.5 Z M1638.2 412.5 V402.4 Q1638.2 401.4 1639.2 401.4 Q1640.2 401.4 1640.2 402.4 V412.5 Z M1643.6 412.5 V400.3 Q1643.6 399.3 1644.6 399.3 Q1645.6 399.3 1645.6 400.3 V412.5 Z"/>
<path d="M1659.5 414.5 H1674.5 M1659.5 406.2 L1660.5 406.2 L1663.3 399.3 L1667 410 L1669.7 405.7 L1671.3 408.4 L1674.5 408.4"/>
<path d="M1691.5 405 V414.5 H1702.5 V402.5 H1697 M1687.8 402.5 H1693.7 M1690.5 399.8 V405.7"/>
<path d="M1718.8 402.5 H1727.5 V414.5 H1715.5 V406 M1716 402.5 L1718.8 399.5 M1716 402.5 L1718.8 405.5"/>
<path d="M1746.8 399.3 V411 M1740.5 405.1 L1746.8 411 L1753.2 405.1 M1740.5 411 V414.5 H1753.2 V411"/>
</g></svg></div>
<div class="abs" style="left:21px;top:54px;width:28px;height:200px;border:1px solid #e4e7ed;border-radius:2px;background:#fff"></div>
<div class="abs" style="left:21px;top:54px;width:28px;height:40px;background:#03aaa8;color:#fff;font-size:14px;line-height:40px;text-align:center">分</div>
<div class="abs" style="left:21px;top:94px;width:28px;height:40px;color:#111;font-size:14px;line-height:40px;text-align:center">时</div>
<div class="abs" style="left:21px;top:134px;width:28px;height:40px;color:#111;font-size:14px;line-height:40px;text-align:center">日</div>
<div class="abs" style="left:21px;top:174px;width:28px;height:40px;color:#111;font-size:14px;line-height:40px;text-align:center">月</div>
<div class="abs" style="left:21px;top:214px;width:28px;height:40px;color:#111;font-size:14px;line-height:40px;text-align:center">年</div>
</div>
<div class="panel" style="left:221px;top:623px;width:1640px;height:277px"><div class="ph">逆变器(在线:3/离线:0)</div>
<div class="abs" style="left:20px;top:53px;width:526px;height:33px;background:#e4f4f4"></div>
<div class="abs" style="left:30px;top:61px;font-size:14px;line-height:20px;color:#111;white-space:nowrap">1#光伏逆变器 (更新时间：2025-07-25 14:34:05)</div>
<div class="abs" style="left:445.8px;top:64.5px;width:9px;height:9px;border-radius:50%;background:#19c866"></div>
<svg class="abs" style="left:463px;top:57px" width="40" height="24" viewBox="0 0 40 24"><g fill="none" stroke="#2fcc74" stroke-width="1"><rect x="1.5" y="9" width="6.5" height="6.5"/><rect x="7.5" y="7" width="27.5" height="10.5"/><line x1="7.5" y1="1" x2="7.5" y2="23.5"/></g></svg>
<div class="abs" style="left:507.5px;top:59px;font-size:14px;line-height:20px;color:#444">在线</div>
<svg class="abs" style="left:69px;top:92px" width="120" height="150" viewBox="0 0 120 150"><defs><linearGradient id="fg69" x1="0" y1="0" x2="1" y2="0"><stop offset="0" stop-color="#dedede"/><stop offset="1" stop-color="#c2c2c2"/></linearGradient></defs>
<rect x="8.5" y="22" width="3" height="94" fill="#ececec"/>
<path d="M11 14.5 L26 10 V138.5 L11 134 Z" fill="#3d3d3d"/>
<path d="M26 9.8 H30 V139 H26 Z" fill="#f4f4f4"/>
<path d="M30 9.5 L104 18 V131 L30 139 Z" fill="url(#fg69)"/>
<rect x="42" y="78" width="51" height="37" rx="3" fill="#3a3a3a"/>
<rect x="62" y="83" width="14.5" height="17" fill="#c9c9c9" stroke="#555" stroke-width=".6"/>
<g fill="none" stroke="#888" stroke-width=".5"><circle cx="61.5" cy="105" r="1.2"/><circle cx="68.5" cy="105" r="1.2"/><circle cx="75.5" cy="105" r="1.2"/><circle cx="61.5" cy="110" r="1.2"/><circle cx="68.5" cy="110" r="1.2"/><circle cx="75.5" cy="110" r="1.2"/></g>
</svg>
<div class="abs" style="left:229.5px;top:92px;font-size:14px;line-height:28px;color:#111;white-space:nowrap">厂家：华为技术有限公司<br>设备型号：SUN2000-100KTL-M0<br>状态：<br>额定交流功率：100kW<br>实时发电功率：19.05kW<br>当日发电量：313.0kW·h<br>组件峰值功率：100kWp</div>
<svg class="abs" style="left:41px;top:247.5px" width="167" height="29" viewBox="0 0 167 29"><path d="M4 0 H167 L155.6 14.3 L167 28.5 H4 Q0 28.5 0 24.5 V4 Q0 0 4 0 Z" fill="#21cf9a"/></svg>
<div class="abs" style="left:41px;top:251.5px;width:167px;text-align:center;font-size:14px;line-height:20px;color:#fff;padding-left:1px">查看详情</div>
<div class="abs" style="left:551px;top:53px;width:526px;height:33px;background:#e4f4f4"></div>
<div class="abs" style="left:561px;top:61px;font-size:14px;line-height:20px;color:#111;white-space:nowrap">2#光伏逆变器 (更新时间：2025-07-25 14:34:06)</div>
<div class="abs" style="left:976.8px;top:64.5px;width:9px;height:9px;border-radius:50%;background:#19c866"></div>
<svg class="abs" style="left:994px;top:57px" width="40" height="24" viewBox="0 0 40 24"><g fill="none" stroke="#2fcc74" stroke-width="1"><rect x="1.5" y="9" width="6.5" height="6.5"/><rect x="7.5" y="7" width="27.5" height="10.5"/><line x1="7.5" y1="1" x2="7.5" y2="23.5"/></g></svg>
<div class="abs" style="left:1038.5px;top:59px;font-size:14px;line-height:20px;color:#444">在线</div>
<svg class="abs" style="left:600px;top:92px" width="120" height="150" viewBox="0 0 120 150"><defs><linearGradient id="fg600" x1="0" y1="0" x2="1" y2="0"><stop offset="0" stop-color="#dedede"/><stop offset="1" stop-color="#c2c2c2"/></linearGradient></defs>
<rect x="8.5" y="22" width="3" height="94" fill="#ececec"/>
<path d="M11 14.5 L26 10 V138.5 L11 134 Z" fill="#3d3d3d"/>
<path d="M26 9.8 H30 V139 H26 Z" fill="#f4f4f4"/>
<path d="M30 9.5 L104 18 V131 L30 139 Z" fill="url(#fg600)"/>
<rect x="42" y="78" width="51" height="37" rx="3" fill="#3a3a3a"/>
<rect x="62" y="83" width="14.5" height="17" fill="#c9c9c9" stroke="#555" stroke-width=".6"/>
<g fill="none" stroke="#888" stroke-width=".5"><circle cx="61.5" cy="105" r="1.2"/><circle cx="68.5" cy="105" r="1.2"/><circle cx="75.5" cy="105" r="1.2"/><circle cx="61.5" cy="110" r="1.2"/><circle cx="68.5" cy="110" r="1.2"/><circle cx="75.5" cy="110" r="1.2"/></g>
</svg>
<div class="abs" style="left:760.5px;top:92px;font-size:14px;line-height:28px;color:#111;white-space:nowrap">厂家：华为技术有限公司<br>设备型号：SUN2000-100KTL-M0<br>状态：<br>额定交流功率：100kW<br>实时发电功率：19.41kW<br>当日发电量：318.9kW·h<br>组件峰值功率：100kWp</div>
<svg class="abs" style="left:572px;top:247.5px" width="167" height="29" viewBox="0 0 167 29"><path d="M4 0 H167 L155.6 14.3 L167 28.5 H4 Q0 28.5 0 24.5 V4 Q0 0 4 0 Z" fill="#21cf9a"/></svg>
<div class="abs" style="left:572px;top:251.5px;width:167px;text-align:center;font-size:14px;line-height:20px;color:#fff;padding-left:1px">查看详情</div>
<div class="abs" style="left:1082px;top:53px;width:526px;height:33px;background:#e4f4f4"></div>
<div class="abs" style="left:1092px;top:61px;font-size:14px;line-height:20px;color:#111;white-space:nowrap">3#光伏逆变器 (更新时间：2025-07-25 14:34:04)</div>
<div class="abs" style="left:1507.8px;top:64.5px;width:9px;height:9px;border-radius:50%;background:#19c866"></div>
<svg class="abs" style="left:1525px;top:57px" width="40" height="24" viewBox="0 0 40 24"><g fill="none" stroke="#2fcc74" stroke-width="1"><rect x="1.5" y="9" width="6.5" height="6.5"/><rect x="7.5" y="7" width="27.5" height="10.5"/><line x1="7.5" y1="1" x2="7.5" y2="23.5"/></g></svg>
<div class="abs" style="left:1569.5px;top:59px;font-size:14px;line-height:20px;color:#444">在线</div>
<svg class="abs" style="left:1131px;top:92px" width="120" height="150" viewBox="0 0 120 150"><defs><linearGradient id="fg1131" x1="0" y1="0" x2="1" y2="0"><stop offset="0" stop-color="#dedede"/><stop offset="1" stop-color="#c2c2c2"/></linearGradient></defs>
<rect x="8.5" y="22" width="3" height="94" fill="#ececec"/>
<path d="M11 14.5 L26 10 V138.5 L11 134 Z" fill="#3d3d3d"/>
<path d="M26 9.8 H30 V139 H26 Z" fill="#f4f4f4"/>
<path d="M30 9.5 L104 18 V131 L30 139 Z" fill="url(#fg1131)"/>
<rect x="42" y="78" width="51" height="37" rx="3" fill="#3a3a3a"/>
<rect x="62" y="83" width="14.5" height="17" fill="#c9c9c9" stroke="#555" stroke-width=".6"/>
<g fill="none" stroke="#888" stroke-width=".5"><circle cx="61.5" cy="105" r="1.2"/><circle cx="68.5" cy="105" r="1.2"/><circle cx="75.5" cy="105" r="1.2"/><circle cx="61.5" cy="110" r="1.2"/><circle cx="68.5" cy="110" r="1.2"/><circle cx="75.5" cy="110" r="1.2"/></g>
</svg>
<div class="abs" style="left:1291.5px;top:92px;font-size:14px;line-height:28px;color:#111;white-space:nowrap">厂家：华为技术有限公司<br>设备型号：SUN2000-100KTL-M0<br>状态：<br>额定交流功率：100kW<br>实时发电功率：19.13kW<br>当日发电量：312.0kW·h<br>组件峰值功率：100kWp</div>
<svg class="abs" style="left:1103px;top:247.5px" width="167" height="29" viewBox="0 0 167 29"><path d="M4 0 H167 L155.6 14.3 L167 28.5 H4 Q0 28.5 0 24.5 V4 Q0 0 4 0 Z" fill="#21cf9a"/></svg>
<div class="abs" style="left:1103px;top:251.5px;width:167px;text-align:center;font-size:14px;line-height:20px;color:#fff;padding-left:1px">查看详情</div>

<div class="abs" style="left:1614.5px;top:72.5px;width:5.5px;height:16px;background:#e3e3e3"></div>
<div class="abs" style="left:1614.5px;top:115px;width:5.5px;height:162px;background:#e3e3e3"></div>
<svg class="abs" style="left:1615px;top:94px" width="16" height="16" viewBox="0 0 16 16"><g stroke="#111" stroke-width="1.1"><line x1="2.5" y1="3" x2="14.5" y2="3"/><line x1="2.5" y1="7.5" x2="14.5" y2="7.5"/><line x1="2.5" y1="12" x2="14.5" y2="12"/></g><g fill="#111"><circle cx="5" cy="3" r="1.4"/><circle cx="11" cy="7.5" r="1.4"/><circle cx="6" cy="12" r="1.4"/></g></svg>
</div>
<div class="abs" style="left:1792.5px;top:627px;width:62px;height:62px;border-radius:50%;background:#fff;box-shadow:0 0 4px rgba(80,200,220,.5)"></div>
<div class="abs" style="left:1794.5px;top:629px;width:58px;height:58px;border-radius:50%;background:linear-gradient(135deg,#e0e04e 0%,#3fbccb 45%,#39b3d6 60%,#6b7ff0 100%)"></div>
<div class="abs" style="left:1794.5px;top:640px;width:58px;text-align:center;font-size:29px;line-height:36px;font-weight:bold;font-style:italic;color:#fff;letter-spacing:2px;text-shadow:0.6px 0 0 #fff,-0.6px 0 0 #fff">AI</div>
<div class="abs" style="left:1790px;top:676px;width:77px;height:20px;border-radius:10px;background:linear-gradient(90deg,#68cfd6,#2fb3cc);box-shadow:0 0 6px rgba(90,210,230,.6);color:#fff;font-size:15px;line-height:19px;text-align:center;padding-right:8px">deepseek</div>
<div class="abs" style="left:1687px;top:833px;width:135px;height:15px;border:1px solid #e6e6e6;box-shadow:1px 1px 0 #ddd;color:#fff;font-size:11px;line-height:13px;text-align:center;text-shadow:0 0 1px #999;overflow:hidden;white-space:nowrap">深度关注新能源经济与发展</div>
<div class="abs" style="left:1644px;top:849px;font-size:37px;line-height:44px;color:rgba(255,255,255,.6);text-shadow:1px 1px 1px rgba(0,0,0,.25);white-space:nowrap;letter-spacing:-1px">世纪新能源网</div>
<div class="abs" style="left:1678px;top:891px;font-family:'Liberation Serif',serif;font-size:12px;line-height:14px;font-weight:bold;color:#fff;text-shadow:0 1px 1px rgba(0,0,0,.3);white-space:nowrap;letter-spacing:-0.1px">Century new energy network</div>

</body></html>
